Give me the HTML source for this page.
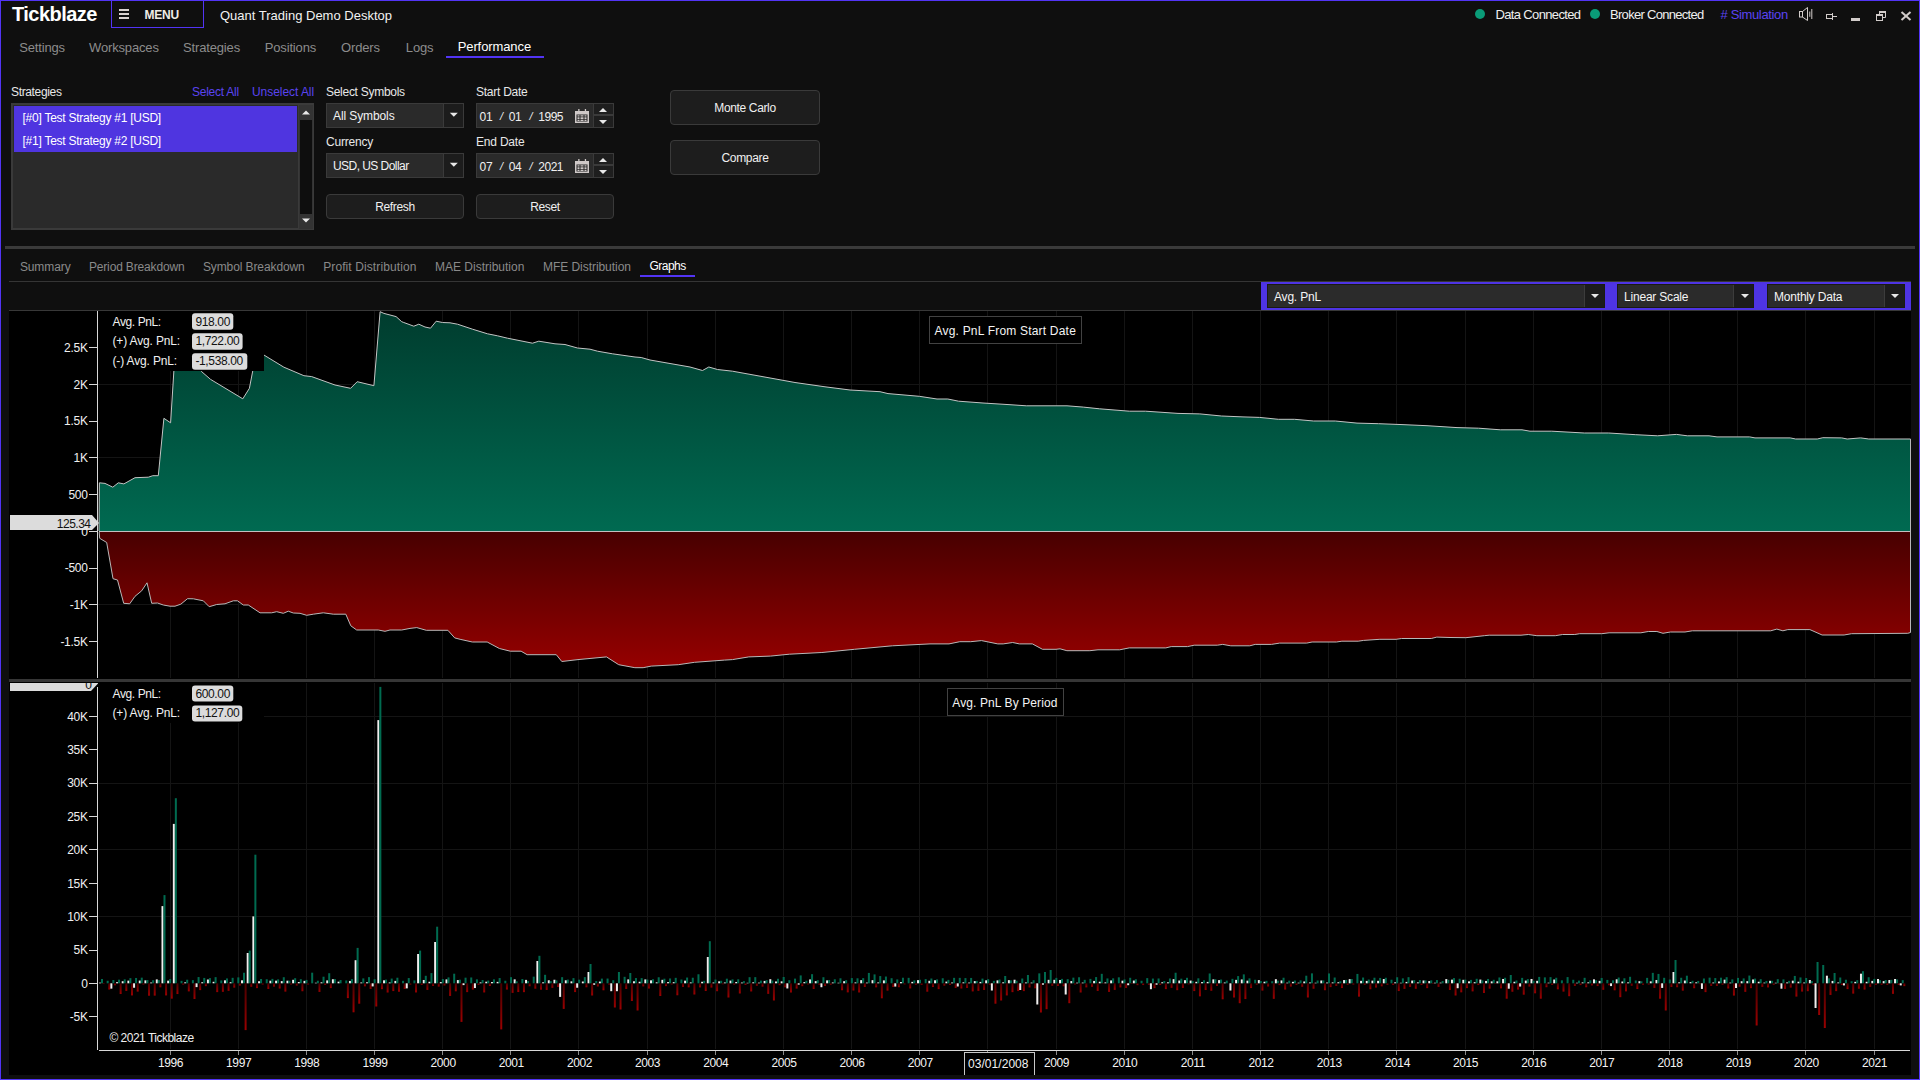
<!DOCTYPE html><html><head><meta charset="utf-8"><style>html,body{margin:0;padding:0;}body{width:1920px;height:1080px;background:#0f0f0f;position:relative;overflow:hidden;font-family:"Liberation Sans",sans-serif;}.t{position:absolute;white-space:pre;line-height:1;}svg{position:absolute;left:0;top:0;}</style></head><body><div class="t" style="top:4.37px;font-size:20px;color:#ffffff;font-weight:bold;letter-spacing:-0.55px;left:12px;">Tickblaze</div><div style="position:absolute;left:111px;top:0px;width:93px;height:28px;box-sizing:border-box;border:1px solid #5234f5;"></div><div style="position:absolute;left:119px;top:9px;width:10px;height:2px;box-sizing:border-box;background:#d8d2d0;"></div><div style="position:absolute;left:119px;top:13px;width:10px;height:2px;box-sizing:border-box;background:#d8d2d0;"></div><div style="position:absolute;left:119px;top:17px;width:10px;height:2px;box-sizing:border-box;background:#d8d2d0;"></div><div class="t" style="top:8.64px;font-size:12px;color:#f0ece6;font-weight:bold;letter-spacing:-0.2px;left:144.5px;">MENU</div><div class="t" style="top:9.00px;font-size:13px;color:#f2f2f2;left:220px;">Quant Trading Demo Desktop</div><div style="position:absolute;left:1475px;top:9px;width:10px;height:10px;border-radius:50%;background:#0a9c78"></div><div class="t" style="top:8.00px;font-size:13px;color:#f0f0f0;letter-spacing:-0.65px;left:1495.5px;">Data Connected</div><div style="position:absolute;left:1590px;top:9px;width:10px;height:10px;border-radius:50%;background:#0a9c78"></div><div class="t" style="top:8.00px;font-size:13px;color:#f0f0f0;letter-spacing:-0.7px;left:1610px;">Broker Connected</div><div class="t" style="top:8.00px;font-size:13px;color:#5b43f2;letter-spacing:-0.35px;left:1720.5px;"># Simulation</div><div class="t" style="top:40.80px;font-size:13px;color:#8c8c8c;letter-spacing:-0.15px;left:19.2px;">Settings</div><div class="t" style="top:40.80px;font-size:13px;color:#8c8c8c;letter-spacing:-0.15px;left:89px;">Workspaces</div><div class="t" style="top:40.80px;font-size:13px;color:#8c8c8c;letter-spacing:-0.15px;left:183px;">Strategies</div><div class="t" style="top:40.80px;font-size:13px;color:#8c8c8c;letter-spacing:-0.15px;left:264.7px;">Positions</div><div class="t" style="top:40.80px;font-size:13px;color:#8c8c8c;letter-spacing:-0.15px;left:341px;">Orders</div><div class="t" style="top:40.80px;font-size:13px;color:#8c8c8c;letter-spacing:-0.15px;left:405.8px;">Logs</div><div class="t" style="top:40.00px;font-size:13px;color:#ffffff;letter-spacing:-0.1px;left:457.7px;">Performance</div><div style="position:absolute;left:446px;top:56px;width:98px;height:2px;box-sizing:border-box;background:#5234f5;"></div><div class="t" style="top:85.64px;font-size:12px;color:#e8e8e8;letter-spacing:-0.35px;left:11px;">Strategies</div><div class="t" style="top:85.84px;font-size:12px;color:#5a44f0;letter-spacing:-0.25px;left:192px;">Select All</div><div class="t" style="top:85.84px;font-size:12px;color:#5a44f0;letter-spacing:-0.05px;left:252px;">Unselect All</div><div style="position:absolute;left:11px;top:103px;width:303px;height:127px;box-sizing:border-box;background:#3a3a3a;"></div><div style="position:absolute;left:13px;top:105px;width:285px;height:123px;box-sizing:border-box;background:#2a2a2a;"></div><div style="position:absolute;left:14px;top:106px;width:283px;height:46px;box-sizing:border-box;background:#4f35e0;"></div><div class="t" style="top:111.54px;font-size:12px;color:#ffffff;letter-spacing:-0.25px;left:22.5px;">[#0] Test Strategy #1 [USD]</div><div class="t" style="top:135.04px;font-size:12px;color:#ffffff;letter-spacing:-0.25px;left:22.5px;">[#1] Test Strategy #2 [USD]</div><div style="position:absolute;left:299px;top:105px;width:14px;height:124px;box-sizing:border-box;background:#333333;"></div><div style="position:absolute;left:300px;top:120px;width:12px;height:94px;box-sizing:border-box;background:#0e0e0e;"></div><div style="position:absolute;left:326px;top:103px;width:138px;height:25px;box-sizing:border-box;background:#2a2a2a;border:1px solid #3a3a3a;"></div><div style="position:absolute;left:443px;top:104px;width:20px;height:23px;box-sizing:border-box;background:#1c1c1c;border-left:1px solid #3a3a3a;"></div><div class="t" style="top:109.84px;font-size:12px;color:#f2f2f2;letter-spacing:-0.1px;left:333px;">All Symbols</div><div class="t" style="top:86.24px;font-size:12px;color:#e8e8e8;letter-spacing:-0.28px;left:326px;">Select Symbols</div><div class="t" style="top:135.84px;font-size:12px;color:#e8e8e8;letter-spacing:-0.2px;left:326px;">Currency</div><div style="position:absolute;left:326px;top:153px;width:138px;height:25px;box-sizing:border-box;background:#2a2a2a;border:1px solid #3a3a3a;"></div><div style="position:absolute;left:443px;top:154px;width:20px;height:23px;box-sizing:border-box;background:#1c1c1c;border-left:1px solid #3a3a3a;"></div><div class="t" style="top:159.84px;font-size:12px;color:#f2f2f2;letter-spacing:-0.55px;left:333px;">USD, US Dollar</div><div style="position:absolute;left:326px;top:194px;width:138px;height:25px;box-sizing:border-box;background:#1d1d1d;border:1px solid #3a3a3a;border-radius:4px;"></div><div class="t" style="top:200.64px;font-size:12px;color:#f0f0f0;letter-spacing:-0.35px;left:326.00px;width:138px;text-align:center;">Refresh</div><div style="position:absolute;left:476px;top:194px;width:138px;height:25px;box-sizing:border-box;background:#1d1d1d;border:1px solid #3a3a3a;border-radius:4px;"></div><div class="t" style="top:200.84px;font-size:12px;color:#f0f0f0;letter-spacing:-0.35px;left:476.00px;width:138px;text-align:center;">Reset</div><div style="position:absolute;left:670px;top:90px;width:150px;height:35px;box-sizing:border-box;background:#1d1d1d;border:1px solid #3a3a3a;border-radius:4px;"></div><div class="t" style="top:102.14px;font-size:12px;color:#f0f0f0;letter-spacing:-0.35px;left:670.00px;width:150px;text-align:center;">Monte Carlo</div><div style="position:absolute;left:670px;top:140px;width:150px;height:35px;box-sizing:border-box;background:#1d1d1d;border:1px solid #3a3a3a;border-radius:4px;"></div><div class="t" style="top:152.14px;font-size:12px;color:#f0f0f0;letter-spacing:-0.35px;left:670.00px;width:150px;text-align:center;">Compare</div><div class="t" style="top:86.34px;font-size:12px;color:#e8e8e8;letter-spacing:-0.25px;left:476px;">Start Date</div><div style="position:absolute;left:476px;top:103px;width:138px;height:25px;box-sizing:border-box;background:#2a2a2a;border:1px solid #3a3a3a;"></div><div style="position:absolute;left:593px;top:103px;width:21px;height:25px;box-sizing:border-box;background:#3a3a3a;"></div><div style="position:absolute;left:594px;top:104px;width:19px;height:10px;box-sizing:border-box;background:#1e1e1e;"></div><div style="position:absolute;left:594px;top:116px;width:19px;height:11px;box-sizing:border-box;background:#1e1e1e;"></div><div class="t" style="top:110.64px;font-size:12px;color:#f0f0f0;letter-spacing:-0.3px;left:479.6px;">01</div><div class="t" style="top:111.49px;font-size:11px;color:#f0f0f0;left:500px;font-style:italic;">/</div><div class="t" style="top:110.64px;font-size:12px;color:#f0f0f0;letter-spacing:-0.3px;left:508.7px;">01</div><div class="t" style="top:111.49px;font-size:11px;color:#f0f0f0;left:529.6px;font-style:italic;">/</div><div class="t" style="top:110.64px;font-size:12px;color:#f0f0f0;letter-spacing:-0.5px;left:538.3px;">1995</div><div class="t" style="top:135.84px;font-size:12px;color:#e8e8e8;letter-spacing:-0.2px;left:476px;">End Date</div><div style="position:absolute;left:476px;top:153px;width:138px;height:25px;box-sizing:border-box;background:#2a2a2a;border:1px solid #3a3a3a;"></div><div style="position:absolute;left:593px;top:153px;width:21px;height:25px;box-sizing:border-box;background:#3a3a3a;"></div><div style="position:absolute;left:594px;top:154px;width:19px;height:10px;box-sizing:border-box;background:#1e1e1e;"></div><div style="position:absolute;left:594px;top:166px;width:19px;height:11px;box-sizing:border-box;background:#1e1e1e;"></div><div class="t" style="top:160.64px;font-size:12px;color:#f0f0f0;letter-spacing:-0.3px;left:479.6px;">07</div><div class="t" style="top:161.49px;font-size:11px;color:#f0f0f0;left:500px;font-style:italic;">/</div><div class="t" style="top:160.64px;font-size:12px;color:#f0f0f0;letter-spacing:-0.3px;left:508.7px;">04</div><div class="t" style="top:161.49px;font-size:11px;color:#f0f0f0;left:529.6px;font-style:italic;">/</div><div class="t" style="top:160.64px;font-size:12px;color:#f0f0f0;letter-spacing:-0.5px;left:538.3px;">2021</div><div style="position:absolute;left:5px;top:246px;width:1910px;height:3px;box-sizing:border-box;background:#3a3a3a;"></div><div class="t" style="top:260.84px;font-size:12px;color:#8a8a8a;letter-spacing:-0.1px;left:19.9px;">Summary</div><div class="t" style="top:260.84px;font-size:12px;color:#8a8a8a;letter-spacing:-0.15px;left:88.9px;">Period Breakdown</div><div class="t" style="top:260.84px;font-size:12px;color:#8a8a8a;letter-spacing:-0.1px;left:202.9px;">Symbol Breakdown</div><div class="t" style="top:260.84px;font-size:12px;color:#8a8a8a;letter-spacing:0.1px;left:323.2px;">Profit Distribution</div><div class="t" style="top:260.84px;font-size:12px;color:#8a8a8a;letter-spacing:0px;left:435px;">MAE Distribution</div><div class="t" style="top:260.84px;font-size:12px;color:#8a8a8a;letter-spacing:-0.05px;left:543px;">MFE Distribution</div><div class="t" style="top:259.84px;font-size:12px;color:#ffffff;letter-spacing:-0.5px;left:649.4px;">Graphs</div><div style="position:absolute;left:640px;top:275px;width:55px;height:2px;box-sizing:border-box;background:#5234f5;"></div><div style="position:absolute;left:9px;top:281px;width:1902px;height:1px;box-sizing:border-box;background:#353535;"></div><div style="position:absolute;left:1261px;top:282px;width:650px;height:28px;box-sizing:border-box;background:#4e34e4;"></div><div style="position:absolute;left:1267px;top:284px;width:338px;height:24px;box-sizing:border-box;background:#2b2b2b;border:1px solid #1a1a14;"></div><div style="position:absolute;left:1584px;top:285px;width:20px;height:22px;box-sizing:border-box;background:#1c1c1c;border-left:1px solid #3c3c3c;"></div><div class="t" style="top:290.84px;font-size:12px;color:#f4f4f4;letter-spacing:-0.2px;left:1274px;">Avg. PnL</div><div style="position:absolute;left:1617px;top:284px;width:137px;height:24px;box-sizing:border-box;background:#2b2b2b;border:1px solid #1a1a14;"></div><div style="position:absolute;left:1733px;top:285px;width:20px;height:22px;box-sizing:border-box;background:#1c1c1c;border-left:1px solid #3c3c3c;"></div><div class="t" style="top:290.84px;font-size:12px;color:#f4f4f4;letter-spacing:-0.2px;left:1624px;">Linear Scale</div><div style="position:absolute;left:1767px;top:284px;width:138px;height:24px;box-sizing:border-box;background:#2b2b2b;border:1px solid #1a1a14;"></div><div style="position:absolute;left:1884px;top:285px;width:20px;height:22px;box-sizing:border-box;background:#1c1c1c;border-left:1px solid #3c3c3c;"></div><div class="t" style="top:290.84px;font-size:12px;color:#f4f4f4;letter-spacing:-0.2px;left:1774px;">Monthly Data</div><svg width="1920" height="1080"><rect x="9" y="310" width="1902" height="1" fill="#383838"/><rect x="9" y="311" width="1902" height="368" fill="#000"/><rect x="9" y="679" width="1902" height="3" fill="#363636"/><rect x="9" y="682" width="1902" height="393" fill="#000"/><line x1="170.5" y1="311" x2="170.5" y2="678" stroke="#141414" stroke-width="1"/><line x1="238.5" y1="311" x2="238.5" y2="678" stroke="#141414" stroke-width="1"/><line x1="306.5" y1="311" x2="306.5" y2="678" stroke="#141414" stroke-width="1"/><line x1="374.5" y1="311" x2="374.5" y2="678" stroke="#141414" stroke-width="1"/><line x1="442.5" y1="311" x2="442.5" y2="678" stroke="#141414" stroke-width="1"/><line x1="510.5" y1="311" x2="510.5" y2="678" stroke="#141414" stroke-width="1"/><line x1="578.5" y1="311" x2="578.5" y2="678" stroke="#141414" stroke-width="1"/><line x1="647.5" y1="311" x2="647.5" y2="678" stroke="#141414" stroke-width="1"/><line x1="715.5" y1="311" x2="715.5" y2="678" stroke="#141414" stroke-width="1"/><line x1="783.5" y1="311" x2="783.5" y2="678" stroke="#141414" stroke-width="1"/><line x1="851.5" y1="311" x2="851.5" y2="678" stroke="#141414" stroke-width="1"/><line x1="919.5" y1="311" x2="919.5" y2="678" stroke="#141414" stroke-width="1"/><line x1="987.5" y1="311" x2="987.5" y2="678" stroke="#141414" stroke-width="1"/><line x1="1056.5" y1="311" x2="1056.5" y2="678" stroke="#141414" stroke-width="1"/><line x1="1124.5" y1="311" x2="1124.5" y2="678" stroke="#141414" stroke-width="1"/><line x1="1192.5" y1="311" x2="1192.5" y2="678" stroke="#141414" stroke-width="1"/><line x1="1260.5" y1="311" x2="1260.5" y2="678" stroke="#141414" stroke-width="1"/><line x1="1328.5" y1="311" x2="1328.5" y2="678" stroke="#141414" stroke-width="1"/><line x1="1396.5" y1="311" x2="1396.5" y2="678" stroke="#141414" stroke-width="1"/><line x1="1465.5" y1="311" x2="1465.5" y2="678" stroke="#141414" stroke-width="1"/><line x1="1533.5" y1="311" x2="1533.5" y2="678" stroke="#141414" stroke-width="1"/><line x1="1601.5" y1="311" x2="1601.5" y2="678" stroke="#141414" stroke-width="1"/><line x1="1669.5" y1="311" x2="1669.5" y2="678" stroke="#141414" stroke-width="1"/><line x1="1737.5" y1="311" x2="1737.5" y2="678" stroke="#141414" stroke-width="1"/><line x1="1805.5" y1="311" x2="1805.5" y2="678" stroke="#141414" stroke-width="1"/><line x1="1874.5" y1="311" x2="1874.5" y2="678" stroke="#141414" stroke-width="1"/><line x1="98" y1="384.5" x2="1911" y2="384.5" stroke="#141414" stroke-width="1"/><line x1="98" y1="457.5" x2="1911" y2="457.5" stroke="#141414" stroke-width="1"/><line x1="98" y1="604.5" x2="1911" y2="604.5" stroke="#141414" stroke-width="1"/><defs><linearGradient id="gg" gradientUnits="userSpaceOnUse" x1="0" y1="311" x2="0" y2="531"><stop offset="0" stop-color="#003c2e"/><stop offset="1" stop-color="#006a51"/></linearGradient><linearGradient id="rg" gradientUnits="userSpaceOnUse" x1="0" y1="531" x2="0" y2="668"><stop offset="0" stop-color="#470000"/><stop offset="1" stop-color="#960000"/></linearGradient><linearGradient id="rb" x1="0" y1="0" x2="0" y2="1"><stop offset="0" stop-color="#4a0000"/><stop offset="1" stop-color="#9a0000"/></linearGradient></defs><polygon points="99.0,531.5 99.4,482.8 105.0,483.4 112.8,487.2 118.3,482.8 123.9,483.9 135.0,477.7 148.3,477.2 152.8,475.7 158.3,475.7 163.9,418.3 170.6,422.8 173.9,370.6 178.0,345.0 201.7,371.7 210.6,379.4 242.8,398.8 249.4,388.3 252.8,370.6 258.0,350.0 263.9,355.0 283.9,367.2 303.9,375.7 311.7,376.6 335.0,385.0 350.6,388.3 357.2,381.7 373.9,385.7 380.1,311.7 383.9,313.4 396.1,316.6 401.7,321.7 403.8,322.5 413.8,326.2 418.8,324.2 425.0,327.0 430.5,328.2 436.2,321.2 442.5,322.5 450.0,322.8 457.5,324.2 472.5,329.2 487.5,333.8 497.5,335.8 507.5,338.2 532.5,343.2 538.8,341.2 555.0,343.8 565.0,344.5 577.5,348.0 590.0,349.2 597.5,351.2 612.5,353.8 635.0,357.0 641.2,357.5 650.0,360.0 690.0,367.0 702.5,370.5 708.8,367.0 717.5,369.5 732.5,371.2 795.0,382.5 825.0,386.8 850.0,390.0 880.0,391.7 888.0,393.6 919.3,396.3 937.0,399.0 947.8,399.0 958.6,401.2 983.0,403.0 1010.0,404.7 1026.3,405.8 1067.0,405.8 1083.3,407.1 1099.5,408.8 1129.3,411.2 1145.6,411.2 1178.0,413.4 1199.8,413.9 1221.5,416.0 1243.0,416.9 1259.4,417.4 1278.4,419.3 1294.6,419.3 1313.6,421.0 1335.3,421.0 1357.0,423.1 1378.6,423.7 1400.0,424.5 1427.0,425.7 1457.0,427.6 1478.6,428.2 1500.3,429.8 1522.0,429.8 1530.0,431.2 1551.8,431.2 1584.3,433.0 1608.7,433.0 1635.8,434.7 1657.5,435.8 1676.4,434.4 1687.3,435.8 1709.0,435.8 1717.0,436.9 1749.6,436.9 1755.0,437.9 1790.2,437.9 1795.7,439.0 1817.3,439.0 1822.8,437.7 1841.7,437.9 1847.2,439.0 1860.7,437.9 1868.8,439.0 1910.5,439.0 1910.5,531.5" fill="url(#gg)"/><polygon points="99.0,531.5 99.2,532.0 99.7,538.3 106.7,542.5 113.0,578.7 117.5,580.0 123.7,603.3 129.7,603.8 135.0,596.3 141.7,590.8 147.0,582.8 151.7,603.3 157.5,603.0 163.3,605.0 170.0,606.2 175.0,606.2 180.8,604.2 187.5,598.7 193.3,598.8 203.3,600.8 209.2,606.7 216.7,604.5 225.0,603.8 233.3,600.8 237.5,600.8 243.3,605.0 248.3,605.0 260.0,612.8 271.7,612.8 276.7,611.7 283.3,613.3 288.3,611.2 293.3,613.0 300.0,613.3 306.7,615.3 313.3,614.2 323.3,612.8 333.3,614.2 345.8,614.2 350.8,625.8 356.7,630.0 378.3,630.0 385.0,631.3 390.0,630.0 401.7,630.0 410.0,628.4 416.8,627.6 426.3,630.3 447.9,630.3 454.7,637.9 460.1,639.3 472.3,642.0 487.2,642.0 499.4,648.5 510.3,651.2 521.1,651.2 527.1,654.7 556.3,654.7 561.8,661.5 578.0,659.6 606.5,656.9 618.7,664.7 634.9,667.7 643.1,667.7 651.2,666.1 678.3,664.7 694.6,662.3 724.4,660.1 732.5,659.6 748.8,656.9 770.4,656.1 789.4,654.2 821.9,652.5 854.4,649.3 892.4,645.8 930.0,643.9 949.0,643.9 959.8,641.7 970.7,641.7 981.5,640.6 997.8,643.9 1003.2,643.9 1012.7,642.5 1019.4,643.9 1032.4,643.9 1042.5,649.3 1056.0,649.3 1060.0,648.8 1066.9,650.7 1089.9,650.7 1098.0,649.8 1119.7,649.8 1129.2,647.9 1165.8,647.9 1171.2,646.6 1187.5,646.6 1194.2,645.2 1217.3,645.2 1222.7,644.4 1230.8,645.8 1249.8,645.8 1255.2,644.4 1271.5,644.4 1279.6,643.1 1306.7,643.1 1312.1,642.0 1336.5,642.0 1341.9,641.2 1358.2,641.2 1363.6,640.4 1379.9,639.3 1396.1,639.3 1401.5,638.5 1431.3,638.5 1436.8,637.1 1450.0,637.5 1465.9,637.7 1484.3,635.7 1489.2,635.2 1521.0,635.2 1528.3,634.5 1536.9,635.7 1555.3,635.7 1562.6,634.5 1574.8,634.5 1579.7,633.7 1601.8,633.7 1609.1,632.8 1640.9,632.8 1648.3,631.5 1656.9,631.5 1663.0,633.3 1670.3,632.0 1685.0,632.0 1692.3,630.8 1770.7,630.8 1776.8,629.1 1782.9,630.8 1787.8,629.6 1809.9,629.6 1822.1,635.0 1844.1,635.0 1851.5,633.7 1907.8,633.3 1910.5,632.5 1910.5,531.5" fill="url(#rg)"/><polyline points="99.0,531.0 99.4,482.8 105.0,483.4 112.8,487.2 118.3,482.8 123.9,483.9 135.0,477.7 148.3,477.2 152.8,475.7 158.3,475.7 163.9,418.3 170.6,422.8 173.9,370.6 178.0,345.0 201.7,371.7 210.6,379.4 242.8,398.8 249.4,388.3 252.8,370.6 258.0,350.0 263.9,355.0 283.9,367.2 303.9,375.7 311.7,376.6 335.0,385.0 350.6,388.3 357.2,381.7 373.9,385.7 380.1,311.7 383.9,313.4 396.1,316.6 401.7,321.7 403.8,322.5 413.8,326.2 418.8,324.2 425.0,327.0 430.5,328.2 436.2,321.2 442.5,322.5 450.0,322.8 457.5,324.2 472.5,329.2 487.5,333.8 497.5,335.8 507.5,338.2 532.5,343.2 538.8,341.2 555.0,343.8 565.0,344.5 577.5,348.0 590.0,349.2 597.5,351.2 612.5,353.8 635.0,357.0 641.2,357.5 650.0,360.0 690.0,367.0 702.5,370.5 708.8,367.0 717.5,369.5 732.5,371.2 795.0,382.5 825.0,386.8 850.0,390.0 880.0,391.7 888.0,393.6 919.3,396.3 937.0,399.0 947.8,399.0 958.6,401.2 983.0,403.0 1010.0,404.7 1026.3,405.8 1067.0,405.8 1083.3,407.1 1099.5,408.8 1129.3,411.2 1145.6,411.2 1178.0,413.4 1199.8,413.9 1221.5,416.0 1243.0,416.9 1259.4,417.4 1278.4,419.3 1294.6,419.3 1313.6,421.0 1335.3,421.0 1357.0,423.1 1378.6,423.7 1400.0,424.5 1427.0,425.7 1457.0,427.6 1478.6,428.2 1500.3,429.8 1522.0,429.8 1530.0,431.2 1551.8,431.2 1584.3,433.0 1608.7,433.0 1635.8,434.7 1657.5,435.8 1676.4,434.4 1687.3,435.8 1709.0,435.8 1717.0,436.9 1749.6,436.9 1755.0,437.9 1790.2,437.9 1795.7,439.0 1817.3,439.0 1822.8,437.7 1841.7,437.9 1847.2,439.0 1860.7,437.9 1868.8,439.0 1910.5,439.0 1910.5,531.5" fill="none" stroke="#c4c4c4" stroke-width="1"/><polyline points="99.2,532.0 99.7,538.3 106.7,542.5 113.0,578.7 117.5,580.0 123.7,603.3 129.7,603.8 135.0,596.3 141.7,590.8 147.0,582.8 151.7,603.3 157.5,603.0 163.3,605.0 170.0,606.2 175.0,606.2 180.8,604.2 187.5,598.7 193.3,598.8 203.3,600.8 209.2,606.7 216.7,604.5 225.0,603.8 233.3,600.8 237.5,600.8 243.3,605.0 248.3,605.0 260.0,612.8 271.7,612.8 276.7,611.7 283.3,613.3 288.3,611.2 293.3,613.0 300.0,613.3 306.7,615.3 313.3,614.2 323.3,612.8 333.3,614.2 345.8,614.2 350.8,625.8 356.7,630.0 378.3,630.0 385.0,631.3 390.0,630.0 401.7,630.0 410.0,628.4 416.8,627.6 426.3,630.3 447.9,630.3 454.7,637.9 460.1,639.3 472.3,642.0 487.2,642.0 499.4,648.5 510.3,651.2 521.1,651.2 527.1,654.7 556.3,654.7 561.8,661.5 578.0,659.6 606.5,656.9 618.7,664.7 634.9,667.7 643.1,667.7 651.2,666.1 678.3,664.7 694.6,662.3 724.4,660.1 732.5,659.6 748.8,656.9 770.4,656.1 789.4,654.2 821.9,652.5 854.4,649.3 892.4,645.8 930.0,643.9 949.0,643.9 959.8,641.7 970.7,641.7 981.5,640.6 997.8,643.9 1003.2,643.9 1012.7,642.5 1019.4,643.9 1032.4,643.9 1042.5,649.3 1056.0,649.3 1060.0,648.8 1066.9,650.7 1089.9,650.7 1098.0,649.8 1119.7,649.8 1129.2,647.9 1165.8,647.9 1171.2,646.6 1187.5,646.6 1194.2,645.2 1217.3,645.2 1222.7,644.4 1230.8,645.8 1249.8,645.8 1255.2,644.4 1271.5,644.4 1279.6,643.1 1306.7,643.1 1312.1,642.0 1336.5,642.0 1341.9,641.2 1358.2,641.2 1363.6,640.4 1379.9,639.3 1396.1,639.3 1401.5,638.5 1431.3,638.5 1436.8,637.1 1450.0,637.5 1465.9,637.7 1484.3,635.7 1489.2,635.2 1521.0,635.2 1528.3,634.5 1536.9,635.7 1555.3,635.7 1562.6,634.5 1574.8,634.5 1579.7,633.7 1601.8,633.7 1609.1,632.8 1640.9,632.8 1648.3,631.5 1656.9,631.5 1663.0,633.3 1670.3,632.0 1685.0,632.0 1692.3,630.8 1770.7,630.8 1776.8,629.1 1782.9,630.8 1787.8,629.6 1809.9,629.6 1822.1,635.0 1844.1,635.0 1851.5,633.7 1907.8,633.3 1910.5,632.5" fill="none" stroke="#b8b8b8" stroke-width="1"/><line x1="99" y1="531.5" x2="1911" y2="531.5" stroke="#c4c0c0" stroke-width="1"/><line x1="1910.5" y1="439" x2="1910.5" y2="632.5" stroke="#b8b8b8" stroke-width="1"/><line x1="97.5" y1="311" x2="97.5" y2="678" stroke="#d8d8d8" stroke-width="1"/><line x1="89" y1="347.5" x2="97" y2="347.5" stroke="#d8d8d8" stroke-width="1"/><line x1="89" y1="384.5" x2="97" y2="384.5" stroke="#d8d8d8" stroke-width="1"/><line x1="89" y1="421.5" x2="97" y2="421.5" stroke="#d8d8d8" stroke-width="1"/><line x1="89" y1="457.5" x2="97" y2="457.5" stroke="#d8d8d8" stroke-width="1"/><line x1="89" y1="494.5" x2="97" y2="494.5" stroke="#d8d8d8" stroke-width="1"/><line x1="89" y1="531.5" x2="97" y2="531.5" stroke="#d8d8d8" stroke-width="1"/><line x1="89" y1="568.5" x2="97" y2="568.5" stroke="#d8d8d8" stroke-width="1"/><line x1="89" y1="604.5" x2="97" y2="604.5" stroke="#d8d8d8" stroke-width="1"/><line x1="89" y1="641.5" x2="97" y2="641.5" stroke="#d8d8d8" stroke-width="1"/><rect x="98" y="311" width="166" height="60" fill="#000"/><rect x="192" y="313.2" width="41.3" height="16.5" rx="3" fill="#dcdcdc"/><rect x="192" y="333.3" width="50.6" height="16.5" rx="3" fill="#dcdcdc"/><rect x="192" y="353.3" width="55.3" height="16.5" rx="3" fill="#dcdcdc"/><rect x="929.5" y="316.5" width="152" height="27" fill="#000" stroke="#424242" stroke-width="1"/><polygon points="10,515 92,515 99,523 92,530 10,530" fill="#dcdcdc"/><line x1="170.5" y1="683" x2="170.5" y2="1049" stroke="#141414" stroke-width="1"/><line x1="238.5" y1="683" x2="238.5" y2="1049" stroke="#141414" stroke-width="1"/><line x1="306.5" y1="683" x2="306.5" y2="1049" stroke="#141414" stroke-width="1"/><line x1="374.5" y1="683" x2="374.5" y2="1049" stroke="#141414" stroke-width="1"/><line x1="442.5" y1="683" x2="442.5" y2="1049" stroke="#141414" stroke-width="1"/><line x1="510.5" y1="683" x2="510.5" y2="1049" stroke="#141414" stroke-width="1"/><line x1="578.5" y1="683" x2="578.5" y2="1049" stroke="#141414" stroke-width="1"/><line x1="647.5" y1="683" x2="647.5" y2="1049" stroke="#141414" stroke-width="1"/><line x1="715.5" y1="683" x2="715.5" y2="1049" stroke="#141414" stroke-width="1"/><line x1="783.5" y1="683" x2="783.5" y2="1049" stroke="#141414" stroke-width="1"/><line x1="851.5" y1="683" x2="851.5" y2="1049" stroke="#141414" stroke-width="1"/><line x1="919.5" y1="683" x2="919.5" y2="1049" stroke="#141414" stroke-width="1"/><line x1="987.5" y1="683" x2="987.5" y2="1049" stroke="#141414" stroke-width="1"/><line x1="1056.5" y1="683" x2="1056.5" y2="1049" stroke="#141414" stroke-width="1"/><line x1="1124.5" y1="683" x2="1124.5" y2="1049" stroke="#141414" stroke-width="1"/><line x1="1192.5" y1="683" x2="1192.5" y2="1049" stroke="#141414" stroke-width="1"/><line x1="1260.5" y1="683" x2="1260.5" y2="1049" stroke="#141414" stroke-width="1"/><line x1="1328.5" y1="683" x2="1328.5" y2="1049" stroke="#141414" stroke-width="1"/><line x1="1396.5" y1="683" x2="1396.5" y2="1049" stroke="#141414" stroke-width="1"/><line x1="1465.5" y1="683" x2="1465.5" y2="1049" stroke="#141414" stroke-width="1"/><line x1="1533.5" y1="683" x2="1533.5" y2="1049" stroke="#141414" stroke-width="1"/><line x1="1601.5" y1="683" x2="1601.5" y2="1049" stroke="#141414" stroke-width="1"/><line x1="1669.5" y1="683" x2="1669.5" y2="1049" stroke="#141414" stroke-width="1"/><line x1="1737.5" y1="683" x2="1737.5" y2="1049" stroke="#141414" stroke-width="1"/><line x1="1805.5" y1="683" x2="1805.5" y2="1049" stroke="#141414" stroke-width="1"/><line x1="1874.5" y1="683" x2="1874.5" y2="1049" stroke="#141414" stroke-width="1"/><line x1="98" y1="716.5" x2="1911" y2="716.5" stroke="#141414" stroke-width="1"/><line x1="98" y1="783.5" x2="1911" y2="783.5" stroke="#141414" stroke-width="1"/><line x1="98" y1="849.5" x2="1911" y2="849.5" stroke="#141414" stroke-width="1"/><line x1="98" y1="916.5" x2="1911" y2="916.5" stroke="#141414" stroke-width="1"/><rect x="99.00" y="982.65" width="2" height="0.65" fill="#f0eeee"/><rect x="101.00" y="978.98" width="2" height="4.32" fill="#006b50"/><rect x="102.60" y="983.3" width="2" height="0.72" fill="url(#rb)"/><rect x="106.68" y="980.76" width="2" height="2.54" fill="#006b50"/><rect x="108.28" y="983.3" width="2" height="6.23" fill="url(#rb)"/><rect x="110.36" y="983.30" width="2" height="5.34" fill="#f0eeee"/><rect x="112.36" y="980.04" width="2" height="3.26" fill="#006b50"/><rect x="113.96" y="983.3" width="2" height="1.98" fill="url(#rb)"/><rect x="116.04" y="982.19" width="2" height="1.11" fill="#f0eeee"/><rect x="118.04" y="979.68" width="2" height="3.62" fill="#006b50"/><rect x="119.64" y="983.3" width="2" height="10.71" fill="url(#rb)"/><rect x="121.72" y="981.22" width="2" height="2.08" fill="#f0eeee"/><rect x="123.72" y="979.33" width="2" height="3.97" fill="#006b50"/><rect x="125.32" y="983.3" width="2" height="7.62" fill="url(#rb)"/><rect x="127.40" y="980.64" width="2" height="2.66" fill="#f0eeee"/><rect x="129.40" y="978.14" width="2" height="5.16" fill="#006b50"/><rect x="131.00" y="983.3" width="2" height="12.13" fill="url(#rb)"/><rect x="133.08" y="983.30" width="2" height="4.45" fill="#f0eeee"/><rect x="135.08" y="977.98" width="2" height="5.32" fill="#006b50"/><rect x="136.68" y="983.3" width="2" height="8.30" fill="url(#rb)"/><rect x="138.76" y="980.56" width="2" height="2.74" fill="#f0eeee"/><rect x="140.76" y="977.66" width="2" height="5.64" fill="#006b50"/><rect x="142.36" y="983.3" width="2" height="1.17" fill="url(#rb)"/><rect x="144.44" y="980.35" width="2" height="2.95" fill="#f0eeee"/><rect x="146.44" y="980.07" width="2" height="3.23" fill="#006b50"/><rect x="148.04" y="983.3" width="2" height="12.42" fill="url(#rb)"/><rect x="150.13" y="982.53" width="2" height="0.77" fill="#f0eeee"/><rect x="152.13" y="980.23" width="2" height="3.07" fill="#006b50"/><rect x="153.73" y="983.3" width="2" height="12.33" fill="url(#rb)"/><rect x="155.81" y="979.42" width="2" height="3.88" fill="#f0eeee"/><rect x="157.81" y="980.09" width="2" height="3.21" fill="#006b50"/><rect x="159.41" y="983.3" width="2" height="3.99" fill="url(#rb)"/><rect x="161.49" y="906.10" width="2" height="77.20" fill="#f0eeee"/><rect x="163.49" y="895.10" width="2" height="88.20" fill="#006b50"/><rect x="165.09" y="983.3" width="2" height="12.13" fill="url(#rb)"/><rect x="167.17" y="980.67" width="2" height="2.63" fill="#f0eeee"/><rect x="169.17" y="979.06" width="2" height="4.24" fill="#006b50"/><rect x="170.77" y="983.3" width="2" height="15.34" fill="url(#rb)"/><rect x="172.85" y="823.90" width="2" height="159.40" fill="#f0eeee"/><rect x="174.85" y="798.20" width="2" height="185.10" fill="#006b50"/><rect x="176.45" y="983.3" width="2" height="10.73" fill="url(#rb)"/><rect x="180.53" y="980.86" width="2" height="2.44" fill="#006b50"/><rect x="182.13" y="983.3" width="2" height="1.21" fill="url(#rb)"/><rect x="184.21" y="982.32" width="2" height="0.98" fill="#f0eeee"/><rect x="186.21" y="979.72" width="2" height="3.58" fill="#006b50"/><rect x="187.81" y="983.3" width="2" height="8.08" fill="url(#rb)"/><rect x="191.89" y="980.15" width="2" height="3.15" fill="#006b50"/><rect x="193.49" y="983.3" width="2" height="15.68" fill="url(#rb)"/><rect x="195.57" y="983.30" width="2" height="3.80" fill="#f0eeee"/><rect x="197.57" y="977.06" width="2" height="6.24" fill="#006b50"/><rect x="199.17" y="983.3" width="2" height="6.81" fill="url(#rb)"/><rect x="201.25" y="982.24" width="2" height="1.06" fill="#f0eeee"/><rect x="203.25" y="977.92" width="2" height="5.38" fill="#006b50"/><rect x="204.85" y="983.3" width="2" height="2.86" fill="url(#rb)"/><rect x="206.93" y="979.54" width="2" height="3.76" fill="#f0eeee"/><rect x="208.93" y="978.09" width="2" height="5.21" fill="#006b50"/><rect x="212.61" y="981.80" width="2" height="1.50" fill="#f0eeee"/><rect x="214.61" y="977.15" width="2" height="6.15" fill="#006b50"/><rect x="216.21" y="983.3" width="2" height="8.81" fill="url(#rb)"/><rect x="220.29" y="980.41" width="2" height="2.89" fill="#006b50"/><rect x="221.89" y="983.3" width="2" height="8.51" fill="url(#rb)"/><rect x="223.97" y="980.33" width="2" height="2.97" fill="#f0eeee"/><rect x="225.97" y="978.44" width="2" height="4.86" fill="#006b50"/><rect x="227.57" y="983.3" width="2" height="7.52" fill="url(#rb)"/><rect x="229.65" y="982.20" width="2" height="1.10" fill="#f0eeee"/><rect x="231.65" y="977.83" width="2" height="5.47" fill="#006b50"/><rect x="233.25" y="983.3" width="2" height="4.30" fill="url(#rb)"/><rect x="237.33" y="977.38" width="2" height="5.92" fill="#006b50"/><rect x="238.93" y="983.3" width="2" height="2.22" fill="url(#rb)"/><rect x="241.01" y="980.31" width="2" height="2.99" fill="#f0eeee"/><rect x="243.01" y="972.75" width="2" height="10.55" fill="#006b50"/><rect x="244.61" y="983.3" width="2" height="46.80" fill="url(#rb)"/><rect x="246.70" y="953.00" width="2" height="30.30" fill="#f0eeee"/><rect x="248.70" y="950.60" width="2" height="32.70" fill="#006b50"/><rect x="250.30" y="983.3" width="2" height="3.44" fill="url(#rb)"/><rect x="252.38" y="916.40" width="2" height="66.90" fill="#f0eeee"/><rect x="254.38" y="854.70" width="2" height="128.60" fill="#006b50"/><rect x="255.98" y="983.3" width="2" height="4.82" fill="url(#rb)"/><rect x="258.06" y="981.24" width="2" height="2.06" fill="#f0eeee"/><rect x="260.06" y="978.99" width="2" height="4.31" fill="#006b50"/><rect x="261.66" y="983.3" width="2" height="1.16" fill="url(#rb)"/><rect x="265.74" y="979.25" width="2" height="4.05" fill="#006b50"/><rect x="267.34" y="983.3" width="2" height="5.64" fill="url(#rb)"/><rect x="269.42" y="980.71" width="2" height="2.59" fill="#f0eeee"/><rect x="271.42" y="978.87" width="2" height="4.43" fill="#006b50"/><rect x="273.02" y="983.3" width="2" height="3.31" fill="url(#rb)"/><rect x="275.10" y="980.69" width="2" height="2.61" fill="#f0eeee"/><rect x="277.10" y="979.38" width="2" height="3.92" fill="#006b50"/><rect x="278.70" y="983.3" width="2" height="5.22" fill="url(#rb)"/><rect x="280.78" y="981.12" width="2" height="2.18" fill="#f0eeee"/><rect x="282.78" y="977.22" width="2" height="6.08" fill="#006b50"/><rect x="284.38" y="983.3" width="2" height="8.31" fill="url(#rb)"/><rect x="286.46" y="980.70" width="2" height="2.60" fill="#f0eeee"/><rect x="288.46" y="980.70" width="2" height="2.60" fill="#006b50"/><rect x="290.06" y="983.3" width="2" height="1.12" fill="url(#rb)"/><rect x="292.14" y="979.81" width="2" height="3.49" fill="#f0eeee"/><rect x="294.14" y="978.19" width="2" height="5.11" fill="#006b50"/><rect x="295.74" y="983.3" width="2" height="2.19" fill="url(#rb)"/><rect x="297.82" y="982.04" width="2" height="1.26" fill="#f0eeee"/><rect x="299.82" y="979.19" width="2" height="4.11" fill="#006b50"/><rect x="301.42" y="983.3" width="2" height="7.94" fill="url(#rb)"/><rect x="303.50" y="980.87" width="2" height="2.43" fill="#f0eeee"/><rect x="305.50" y="979.92" width="2" height="3.38" fill="#006b50"/><rect x="307.10" y="983.3" width="2" height="1.16" fill="url(#rb)"/><rect x="311.18" y="972.69" width="2" height="10.61" fill="#006b50"/><rect x="314.86" y="982.74" width="2" height="0.56" fill="#f0eeee"/><rect x="316.86" y="980.74" width="2" height="2.56" fill="#006b50"/><rect x="318.46" y="983.3" width="2" height="8.60" fill="url(#rb)"/><rect x="320.54" y="982.31" width="2" height="0.99" fill="#f0eeee"/><rect x="322.54" y="976.71" width="2" height="6.59" fill="#006b50"/><rect x="324.14" y="983.3" width="2" height="1.56" fill="url(#rb)"/><rect x="326.22" y="980.40" width="2" height="2.90" fill="#f0eeee"/><rect x="328.22" y="973.22" width="2" height="10.08" fill="#006b50"/><rect x="329.82" y="983.3" width="2" height="4.78" fill="url(#rb)"/><rect x="331.90" y="979.25" width="2" height="4.05" fill="#f0eeee"/><rect x="333.90" y="979.01" width="2" height="4.29" fill="#006b50"/><rect x="337.58" y="981.67" width="2" height="1.63" fill="#f0eeee"/><rect x="339.58" y="980.04" width="2" height="3.26" fill="#006b50"/><rect x="345.27" y="980.48" width="2" height="2.82" fill="#006b50"/><rect x="346.87" y="983.3" width="2" height="14.80" fill="url(#rb)"/><rect x="348.95" y="980.95" width="2" height="2.35" fill="#f0eeee"/><rect x="350.95" y="979.10" width="2" height="4.20" fill="#006b50"/><rect x="352.55" y="983.3" width="2" height="29.00" fill="url(#rb)"/><rect x="354.63" y="960.20" width="2" height="23.10" fill="#f0eeee"/><rect x="356.63" y="947.90" width="2" height="35.40" fill="#006b50"/><rect x="358.23" y="983.3" width="2" height="20.40" fill="url(#rb)"/><rect x="360.31" y="982.46" width="2" height="0.84" fill="#f0eeee"/><rect x="362.31" y="978.39" width="2" height="4.91" fill="#006b50"/><rect x="363.91" y="983.3" width="2" height="3.02" fill="url(#rb)"/><rect x="365.99" y="982.28" width="2" height="1.02" fill="#f0eeee"/><rect x="367.99" y="977.13" width="2" height="6.17" fill="#006b50"/><rect x="369.59" y="983.3" width="2" height="5.56" fill="url(#rb)"/><rect x="371.67" y="983.30" width="2" height="3.12" fill="#f0eeee"/><rect x="373.67" y="979.24" width="2" height="4.06" fill="#006b50"/><rect x="375.27" y="983.3" width="2" height="23.20" fill="url(#rb)"/><rect x="377.35" y="720.10" width="2" height="263.20" fill="#f0eeee"/><rect x="379.35" y="686.90" width="2" height="296.40" fill="#006b50"/><rect x="380.95" y="983.3" width="2" height="5.88" fill="url(#rb)"/><rect x="383.03" y="980.31" width="2" height="2.99" fill="#f0eeee"/><rect x="385.03" y="979.61" width="2" height="3.69" fill="#006b50"/><rect x="386.63" y="983.3" width="2" height="9.21" fill="url(#rb)"/><rect x="388.71" y="982.46" width="2" height="0.84" fill="#f0eeee"/><rect x="390.71" y="978.58" width="2" height="4.72" fill="#006b50"/><rect x="392.31" y="983.3" width="2" height="7.77" fill="url(#rb)"/><rect x="394.39" y="980.91" width="2" height="2.39" fill="#f0eeee"/><rect x="396.39" y="977.72" width="2" height="5.58" fill="#006b50"/><rect x="397.99" y="983.3" width="2" height="8.44" fill="url(#rb)"/><rect x="402.07" y="980.84" width="2" height="2.46" fill="#006b50"/><rect x="403.67" y="983.3" width="2" height="5.66" fill="url(#rb)"/><rect x="405.75" y="983.30" width="2" height="5.06" fill="#f0eeee"/><rect x="407.75" y="978.05" width="2" height="5.25" fill="#006b50"/><rect x="409.35" y="983.3" width="2" height="1.23" fill="url(#rb)"/><rect x="413.43" y="980.41" width="2" height="2.89" fill="#006b50"/><rect x="415.03" y="983.3" width="2" height="9.14" fill="url(#rb)"/><rect x="417.11" y="954.00" width="2" height="29.30" fill="#f0eeee"/><rect x="419.11" y="950.60" width="2" height="32.70" fill="#006b50"/><rect x="420.71" y="983.3" width="2" height="1.65" fill="url(#rb)"/><rect x="422.79" y="979.98" width="2" height="3.32" fill="#f0eeee"/><rect x="424.79" y="975.80" width="2" height="7.50" fill="#006b50"/><rect x="426.39" y="983.3" width="2" height="6.60" fill="url(#rb)"/><rect x="428.47" y="981.76" width="2" height="1.54" fill="#f0eeee"/><rect x="430.47" y="973.09" width="2" height="10.21" fill="#006b50"/><rect x="432.07" y="983.3" width="2" height="2.66" fill="url(#rb)"/><rect x="434.15" y="942.00" width="2" height="41.30" fill="#f0eeee"/><rect x="436.15" y="926.70" width="2" height="56.60" fill="#006b50"/><rect x="437.75" y="983.3" width="2" height="3.24" fill="url(#rb)"/><rect x="439.84" y="982.07" width="2" height="1.23" fill="#f0eeee"/><rect x="441.84" y="979.03" width="2" height="4.27" fill="#006b50"/><rect x="443.44" y="983.3" width="2" height="2.11" fill="url(#rb)"/><rect x="445.52" y="979.41" width="2" height="3.89" fill="#f0eeee"/><rect x="447.52" y="977.41" width="2" height="5.89" fill="#006b50"/><rect x="449.12" y="983.3" width="2" height="12.62" fill="url(#rb)"/><rect x="453.20" y="973.71" width="2" height="9.59" fill="#006b50"/><rect x="454.80" y="983.3" width="2" height="8.00" fill="url(#rb)"/><rect x="456.88" y="980.09" width="2" height="3.21" fill="#f0eeee"/><rect x="458.88" y="979.69" width="2" height="3.61" fill="#006b50"/><rect x="460.48" y="983.3" width="2" height="38.60" fill="url(#rb)"/><rect x="462.56" y="983.30" width="2" height="1.81" fill="#f0eeee"/><rect x="464.56" y="977.68" width="2" height="5.62" fill="#006b50"/><rect x="466.16" y="983.3" width="2" height="8.80" fill="url(#rb)"/><rect x="470.24" y="977.47" width="2" height="5.83" fill="#006b50"/><rect x="471.84" y="983.3" width="2" height="6.26" fill="url(#rb)"/><rect x="473.92" y="983.30" width="2" height="4.75" fill="#f0eeee"/><rect x="475.92" y="979.34" width="2" height="3.96" fill="#006b50"/><rect x="477.52" y="983.3" width="2" height="1.55" fill="url(#rb)"/><rect x="479.60" y="982.40" width="2" height="0.90" fill="#f0eeee"/><rect x="481.60" y="980.01" width="2" height="3.29" fill="#006b50"/><rect x="483.20" y="983.3" width="2" height="9.14" fill="url(#rb)"/><rect x="485.28" y="981.72" width="2" height="1.58" fill="#f0eeee"/><rect x="487.28" y="980.57" width="2" height="2.73" fill="#006b50"/><rect x="488.88" y="983.3" width="2" height="2.73" fill="url(#rb)"/><rect x="490.96" y="982.03" width="2" height="1.27" fill="#f0eeee"/><rect x="492.96" y="979.35" width="2" height="3.95" fill="#006b50"/><rect x="496.64" y="981.88" width="2" height="1.42" fill="#f0eeee"/><rect x="498.64" y="978.05" width="2" height="5.25" fill="#006b50"/><rect x="500.24" y="983.3" width="2" height="46.10" fill="url(#rb)"/><rect x="504.32" y="980.75" width="2" height="2.55" fill="#006b50"/><rect x="505.92" y="983.3" width="2" height="6.25" fill="url(#rb)"/><rect x="510.00" y="977.16" width="2" height="6.14" fill="#006b50"/><rect x="511.60" y="983.3" width="2" height="9.55" fill="url(#rb)"/><rect x="513.68" y="979.37" width="2" height="3.93" fill="#f0eeee"/><rect x="515.68" y="981.30" width="2" height="2.00" fill="#006b50"/><rect x="517.28" y="983.3" width="2" height="8.73" fill="url(#rb)"/><rect x="521.36" y="979.03" width="2" height="4.27" fill="#006b50"/><rect x="522.96" y="983.3" width="2" height="8.85" fill="url(#rb)"/><rect x="525.04" y="979.89" width="2" height="3.41" fill="#f0eeee"/><rect x="527.04" y="981.13" width="2" height="2.17" fill="#006b50"/><rect x="528.64" y="983.3" width="2" height="2.94" fill="url(#rb)"/><rect x="532.72" y="976.66" width="2" height="6.64" fill="#006b50"/><rect x="534.32" y="983.3" width="2" height="5.37" fill="url(#rb)"/><rect x="536.40" y="961.00" width="2" height="22.30" fill="#f0eeee"/><rect x="538.40" y="955.80" width="2" height="27.50" fill="#006b50"/><rect x="540.00" y="983.3" width="2" height="6.37" fill="url(#rb)"/><rect x="542.09" y="982.34" width="2" height="0.96" fill="#f0eeee"/><rect x="544.09" y="974.80" width="2" height="8.50" fill="#006b50"/><rect x="545.69" y="983.3" width="2" height="6.62" fill="url(#rb)"/><rect x="547.77" y="980.27" width="2" height="3.03" fill="#f0eeee"/><rect x="549.77" y="981.15" width="2" height="2.15" fill="#006b50"/><rect x="551.37" y="983.3" width="2" height="4.51" fill="url(#rb)"/><rect x="553.45" y="979.76" width="2" height="3.54" fill="#f0eeee"/><rect x="555.45" y="980.41" width="2" height="2.89" fill="#006b50"/><rect x="557.05" y="983.3" width="2" height="3.60" fill="url(#rb)"/><rect x="559.13" y="983.30" width="2" height="13.60" fill="#f0eeee"/><rect x="561.13" y="977.17" width="2" height="6.13" fill="#006b50"/><rect x="562.73" y="983.3" width="2" height="25.60" fill="url(#rb)"/><rect x="564.81" y="980.28" width="2" height="3.02" fill="#f0eeee"/><rect x="566.81" y="979.59" width="2" height="3.71" fill="#006b50"/><rect x="570.49" y="981.35" width="2" height="1.95" fill="#f0eeee"/><rect x="572.49" y="978.12" width="2" height="5.18" fill="#006b50"/><rect x="574.09" y="983.3" width="2" height="8.77" fill="url(#rb)"/><rect x="576.17" y="983.30" width="2" height="4.44" fill="#f0eeee"/><rect x="578.17" y="979.66" width="2" height="3.64" fill="#006b50"/><rect x="581.85" y="981.52" width="2" height="1.78" fill="#f0eeee"/><rect x="583.85" y="977.12" width="2" height="6.18" fill="#006b50"/><rect x="585.45" y="983.3" width="2" height="3.97" fill="url(#rb)"/><rect x="587.53" y="972.00" width="2" height="11.30" fill="#f0eeee"/><rect x="589.53" y="964.00" width="2" height="19.30" fill="#006b50"/><rect x="591.13" y="983.3" width="2" height="12.20" fill="url(#rb)"/><rect x="593.21" y="983.30" width="2" height="1.50" fill="#f0eeee"/><rect x="595.21" y="981.03" width="2" height="2.27" fill="#006b50"/><rect x="596.81" y="983.3" width="2" height="3.14" fill="url(#rb)"/><rect x="598.89" y="981.57" width="2" height="1.73" fill="#f0eeee"/><rect x="600.89" y="978.62" width="2" height="4.68" fill="#006b50"/><rect x="602.49" y="983.3" width="2" height="6.98" fill="url(#rb)"/><rect x="606.57" y="978.55" width="2" height="4.75" fill="#006b50"/><rect x="608.17" y="983.3" width="2" height="1.20" fill="url(#rb)"/><rect x="610.25" y="983.30" width="2" height="7.90" fill="#f0eeee"/><rect x="612.25" y="980.21" width="2" height="3.09" fill="#006b50"/><rect x="613.85" y="983.3" width="2" height="24.20" fill="url(#rb)"/><rect x="615.93" y="983.30" width="2" height="7.90" fill="#f0eeee"/><rect x="617.93" y="972.00" width="2" height="11.30" fill="#006b50"/><rect x="619.53" y="983.3" width="2" height="26.20" fill="url(#rb)"/><rect x="623.61" y="976.82" width="2" height="6.48" fill="#006b50"/><rect x="625.21" y="983.3" width="2" height="5.61" fill="url(#rb)"/><rect x="627.29" y="979.42" width="2" height="3.88" fill="#f0eeee"/><rect x="629.29" y="973.00" width="2" height="10.30" fill="#006b50"/><rect x="630.89" y="983.3" width="2" height="17.70" fill="url(#rb)"/><rect x="632.97" y="981.26" width="2" height="2.04" fill="#f0eeee"/><rect x="634.97" y="978.06" width="2" height="5.24" fill="#006b50"/><rect x="636.57" y="983.3" width="2" height="27.20" fill="url(#rb)"/><rect x="638.66" y="981.74" width="2" height="1.56" fill="#f0eeee"/><rect x="640.66" y="978.10" width="2" height="5.20" fill="#006b50"/><rect x="642.26" y="983.3" width="2" height="3.06" fill="url(#rb)"/><rect x="644.34" y="979.42" width="2" height="3.88" fill="#f0eeee"/><rect x="646.34" y="979.58" width="2" height="3.72" fill="#006b50"/><rect x="647.94" y="983.3" width="2" height="5.23" fill="url(#rb)"/><rect x="650.02" y="980.33" width="2" height="2.97" fill="#f0eeee"/><rect x="652.02" y="979.24" width="2" height="4.06" fill="#006b50"/><rect x="655.70" y="982.33" width="2" height="0.97" fill="#f0eeee"/><rect x="657.70" y="977.27" width="2" height="6.03" fill="#006b50"/><rect x="659.30" y="983.3" width="2" height="12.70" fill="url(#rb)"/><rect x="661.38" y="979.84" width="2" height="3.46" fill="#f0eeee"/><rect x="663.38" y="978.71" width="2" height="4.59" fill="#006b50"/><rect x="664.98" y="983.3" width="2" height="2.82" fill="url(#rb)"/><rect x="667.06" y="982.10" width="2" height="1.20" fill="#f0eeee"/><rect x="669.06" y="978.47" width="2" height="4.83" fill="#006b50"/><rect x="670.66" y="983.3" width="2" height="1.10" fill="url(#rb)"/><rect x="672.74" y="982.17" width="2" height="1.13" fill="#f0eeee"/><rect x="674.74" y="977.85" width="2" height="5.45" fill="#006b50"/><rect x="676.34" y="983.3" width="2" height="11.97" fill="url(#rb)"/><rect x="680.42" y="979.52" width="2" height="3.78" fill="#006b50"/><rect x="682.02" y="983.3" width="2" height="3.57" fill="url(#rb)"/><rect x="684.10" y="980.67" width="2" height="2.63" fill="#f0eeee"/><rect x="686.10" y="977.55" width="2" height="5.75" fill="#006b50"/><rect x="687.70" y="983.3" width="2" height="4.03" fill="url(#rb)"/><rect x="689.78" y="982.40" width="2" height="0.90" fill="#f0eeee"/><rect x="691.78" y="977.74" width="2" height="5.56" fill="#006b50"/><rect x="693.38" y="983.3" width="2" height="11.20" fill="url(#rb)"/><rect x="697.46" y="974.27" width="2" height="9.03" fill="#006b50"/><rect x="699.06" y="983.3" width="2" height="4.09" fill="url(#rb)"/><rect x="701.14" y="981.78" width="2" height="1.52" fill="#f0eeee"/><rect x="703.14" y="980.83" width="2" height="2.47" fill="#006b50"/><rect x="704.74" y="983.3" width="2" height="7.71" fill="url(#rb)"/><rect x="706.82" y="957.00" width="2" height="26.30" fill="#f0eeee"/><rect x="708.82" y="941.20" width="2" height="42.10" fill="#006b50"/><rect x="710.42" y="983.3" width="2" height="4.23" fill="url(#rb)"/><rect x="712.50" y="982.51" width="2" height="0.79" fill="#f0eeee"/><rect x="714.50" y="979.55" width="2" height="3.75" fill="#006b50"/><rect x="716.10" y="983.3" width="2" height="7.91" fill="url(#rb)"/><rect x="718.18" y="981.33" width="2" height="1.97" fill="#f0eeee"/><rect x="720.18" y="980.77" width="2" height="2.53" fill="#006b50"/><rect x="721.78" y="983.3" width="2" height="0.94" fill="url(#rb)"/><rect x="723.86" y="982.46" width="2" height="0.84" fill="#f0eeee"/><rect x="725.86" y="978.70" width="2" height="4.60" fill="#006b50"/><rect x="727.46" y="983.3" width="2" height="14.20" fill="url(#rb)"/><rect x="729.54" y="980.61" width="2" height="2.69" fill="#f0eeee"/><rect x="731.54" y="979.36" width="2" height="3.94" fill="#006b50"/><rect x="733.14" y="983.3" width="2" height="1.20" fill="url(#rb)"/><rect x="735.23" y="981.97" width="2" height="1.33" fill="#f0eeee"/><rect x="737.23" y="979.31" width="2" height="3.99" fill="#006b50"/><rect x="738.83" y="983.3" width="2" height="10.19" fill="url(#rb)"/><rect x="740.91" y="982.54" width="2" height="0.76" fill="#f0eeee"/><rect x="742.91" y="981.12" width="2" height="2.18" fill="#006b50"/><rect x="744.51" y="983.3" width="2" height="1.69" fill="url(#rb)"/><rect x="746.59" y="982.80" width="2" height="0.50" fill="#f0eeee"/><rect x="748.59" y="977.18" width="2" height="6.12" fill="#006b50"/><rect x="750.19" y="983.3" width="2" height="8.15" fill="url(#rb)"/><rect x="752.27" y="982.32" width="2" height="0.98" fill="#f0eeee"/><rect x="754.27" y="977.15" width="2" height="6.15" fill="#006b50"/><rect x="755.87" y="983.3" width="2" height="2.38" fill="url(#rb)"/><rect x="757.95" y="982.64" width="2" height="0.66" fill="#f0eeee"/><rect x="759.95" y="980.61" width="2" height="2.69" fill="#006b50"/><rect x="761.55" y="983.3" width="2" height="3.29" fill="url(#rb)"/><rect x="763.63" y="980.92" width="2" height="2.38" fill="#f0eeee"/><rect x="765.63" y="980.16" width="2" height="3.14" fill="#006b50"/><rect x="767.23" y="983.3" width="2" height="10.55" fill="url(#rb)"/><rect x="769.31" y="979.21" width="2" height="4.09" fill="#f0eeee"/><rect x="771.31" y="980.57" width="2" height="2.73" fill="#006b50"/><rect x="772.91" y="983.3" width="2" height="17.20" fill="url(#rb)"/><rect x="774.99" y="981.48" width="2" height="1.82" fill="#f0eeee"/><rect x="776.99" y="978.78" width="2" height="4.52" fill="#006b50"/><rect x="778.59" y="983.3" width="2" height="1.87" fill="url(#rb)"/><rect x="780.67" y="981.35" width="2" height="1.95" fill="#f0eeee"/><rect x="782.67" y="977.00" width="2" height="6.30" fill="#006b50"/><rect x="784.27" y="983.3" width="2" height="4.00" fill="url(#rb)"/><rect x="786.35" y="983.30" width="2" height="5.16" fill="#f0eeee"/><rect x="788.35" y="980.20" width="2" height="3.10" fill="#006b50"/><rect x="789.95" y="983.3" width="2" height="9.21" fill="url(#rb)"/><rect x="794.03" y="978.63" width="2" height="4.67" fill="#006b50"/><rect x="795.63" y="983.3" width="2" height="5.27" fill="url(#rb)"/><rect x="797.71" y="983.30" width="2" height="1.35" fill="#f0eeee"/><rect x="799.71" y="975.42" width="2" height="7.88" fill="#006b50"/><rect x="801.31" y="983.3" width="2" height="2.87" fill="url(#rb)"/><rect x="803.39" y="982.10" width="2" height="1.20" fill="#f0eeee"/><rect x="805.39" y="980.71" width="2" height="2.59" fill="#006b50"/><rect x="806.99" y="983.3" width="2" height="1.06" fill="url(#rb)"/><rect x="809.07" y="979.47" width="2" height="3.83" fill="#f0eeee"/><rect x="811.07" y="974.17" width="2" height="9.13" fill="#006b50"/><rect x="812.67" y="983.3" width="2" height="5.69" fill="url(#rb)"/><rect x="814.75" y="981.15" width="2" height="2.15" fill="#f0eeee"/><rect x="816.75" y="980.22" width="2" height="3.08" fill="#006b50"/><rect x="818.35" y="983.3" width="2" height="1.37" fill="url(#rb)"/><rect x="820.43" y="983.30" width="2" height="3.91" fill="#f0eeee"/><rect x="822.43" y="977.22" width="2" height="6.08" fill="#006b50"/><rect x="824.03" y="983.3" width="2" height="2.66" fill="url(#rb)"/><rect x="826.11" y="980.38" width="2" height="2.92" fill="#f0eeee"/><rect x="828.11" y="979.96" width="2" height="3.34" fill="#006b50"/><rect x="829.71" y="983.3" width="2" height="1.40" fill="url(#rb)"/><rect x="831.80" y="982.46" width="2" height="0.84" fill="#f0eeee"/><rect x="833.80" y="979.28" width="2" height="4.02" fill="#006b50"/><rect x="837.48" y="982.75" width="2" height="0.55" fill="#f0eeee"/><rect x="839.48" y="978.29" width="2" height="5.01" fill="#006b50"/><rect x="841.08" y="983.3" width="2" height="6.93" fill="url(#rb)"/><rect x="843.16" y="981.18" width="2" height="2.12" fill="#f0eeee"/><rect x="845.16" y="980.15" width="2" height="3.15" fill="#006b50"/><rect x="846.76" y="983.3" width="2" height="9.05" fill="url(#rb)"/><rect x="850.84" y="978.07" width="2" height="5.23" fill="#006b50"/><rect x="852.44" y="983.3" width="2" height="7.22" fill="url(#rb)"/><rect x="854.52" y="982.39" width="2" height="0.91" fill="#f0eeee"/><rect x="856.52" y="978.30" width="2" height="5.00" fill="#006b50"/><rect x="858.12" y="983.3" width="2" height="9.16" fill="url(#rb)"/><rect x="860.20" y="980.15" width="2" height="3.15" fill="#f0eeee"/><rect x="862.20" y="978.16" width="2" height="5.14" fill="#006b50"/><rect x="863.80" y="983.3" width="2" height="3.57" fill="url(#rb)"/><rect x="865.88" y="982.59" width="2" height="0.71" fill="#f0eeee"/><rect x="867.88" y="972.94" width="2" height="10.36" fill="#006b50"/><rect x="871.56" y="980.17" width="2" height="3.13" fill="#f0eeee"/><rect x="873.56" y="974.40" width="2" height="8.90" fill="#006b50"/><rect x="875.16" y="983.3" width="2" height="4.03" fill="url(#rb)"/><rect x="877.24" y="982.43" width="2" height="0.87" fill="#f0eeee"/><rect x="879.24" y="976.07" width="2" height="7.23" fill="#006b50"/><rect x="880.84" y="983.3" width="2" height="14.99" fill="url(#rb)"/><rect x="882.92" y="980.40" width="2" height="2.90" fill="#f0eeee"/><rect x="884.92" y="976.54" width="2" height="6.76" fill="#006b50"/><rect x="886.52" y="983.3" width="2" height="7.32" fill="url(#rb)"/><rect x="890.60" y="978.20" width="2" height="5.10" fill="#006b50"/><rect x="892.20" y="983.3" width="2" height="3.68" fill="url(#rb)"/><rect x="894.28" y="983.30" width="2" height="3.26" fill="#f0eeee"/><rect x="896.28" y="979.41" width="2" height="3.89" fill="#006b50"/><rect x="897.88" y="983.3" width="2" height="3.89" fill="url(#rb)"/><rect x="899.96" y="982.05" width="2" height="1.25" fill="#f0eeee"/><rect x="901.96" y="977.74" width="2" height="5.56" fill="#006b50"/><rect x="903.56" y="983.3" width="2" height="1.01" fill="url(#rb)"/><rect x="907.64" y="977.84" width="2" height="5.46" fill="#006b50"/><rect x="909.24" y="983.3" width="2" height="5.12" fill="url(#rb)"/><rect x="911.32" y="981.87" width="2" height="1.43" fill="#f0eeee"/><rect x="913.32" y="980.37" width="2" height="2.93" fill="#006b50"/><rect x="914.92" y="983.3" width="2" height="1.31" fill="url(#rb)"/><rect x="917.00" y="980.16" width="2" height="3.14" fill="#f0eeee"/><rect x="919.00" y="979.76" width="2" height="3.54" fill="#006b50"/><rect x="920.60" y="983.3" width="2" height="1.48" fill="url(#rb)"/><rect x="924.68" y="979.13" width="2" height="4.17" fill="#006b50"/><rect x="926.28" y="983.3" width="2" height="8.37" fill="url(#rb)"/><rect x="928.37" y="980.81" width="2" height="2.49" fill="#f0eeee"/><rect x="930.37" y="978.50" width="2" height="4.80" fill="#006b50"/><rect x="931.97" y="983.3" width="2" height="3.72" fill="url(#rb)"/><rect x="934.05" y="980.29" width="2" height="3.01" fill="#f0eeee"/><rect x="936.05" y="979.40" width="2" height="3.90" fill="#006b50"/><rect x="937.65" y="983.3" width="2" height="5.83" fill="url(#rb)"/><rect x="941.73" y="978.25" width="2" height="5.05" fill="#006b50"/><rect x="943.33" y="983.3" width="2" height="2.29" fill="url(#rb)"/><rect x="945.41" y="981.61" width="2" height="1.69" fill="#f0eeee"/><rect x="947.41" y="979.88" width="2" height="3.42" fill="#006b50"/><rect x="949.01" y="983.3" width="2" height="1.60" fill="url(#rb)"/><rect x="951.09" y="982.50" width="2" height="0.80" fill="#f0eeee"/><rect x="953.09" y="977.85" width="2" height="5.45" fill="#006b50"/><rect x="954.69" y="983.3" width="2" height="4.63" fill="url(#rb)"/><rect x="956.77" y="983.30" width="2" height="3.20" fill="#f0eeee"/><rect x="958.77" y="977.87" width="2" height="5.43" fill="#006b50"/><rect x="960.37" y="983.3" width="2" height="5.17" fill="url(#rb)"/><rect x="962.45" y="982.34" width="2" height="0.96" fill="#f0eeee"/><rect x="964.45" y="978.09" width="2" height="5.21" fill="#006b50"/><rect x="966.05" y="983.3" width="2" height="4.59" fill="url(#rb)"/><rect x="968.13" y="982.58" width="2" height="0.72" fill="#f0eeee"/><rect x="970.13" y="977.94" width="2" height="5.36" fill="#006b50"/><rect x="971.73" y="983.3" width="2" height="8.11" fill="url(#rb)"/><rect x="973.81" y="981.11" width="2" height="2.19" fill="#f0eeee"/><rect x="975.81" y="980.87" width="2" height="2.43" fill="#006b50"/><rect x="977.41" y="983.3" width="2" height="7.52" fill="url(#rb)"/><rect x="979.49" y="981.92" width="2" height="1.38" fill="#f0eeee"/><rect x="981.49" y="978.60" width="2" height="4.70" fill="#006b50"/><rect x="983.09" y="983.3" width="2" height="6.63" fill="url(#rb)"/><rect x="985.17" y="980.32" width="2" height="2.98" fill="#f0eeee"/><rect x="987.17" y="979.18" width="2" height="4.12" fill="#006b50"/><rect x="988.77" y="983.3" width="2" height="1.32" fill="url(#rb)"/><rect x="990.85" y="983.30" width="2" height="7.20" fill="#f0eeee"/><rect x="992.85" y="980.86" width="2" height="2.44" fill="#006b50"/><rect x="994.45" y="983.3" width="2" height="20.40" fill="url(#rb)"/><rect x="996.53" y="980.38" width="2" height="2.92" fill="#f0eeee"/><rect x="998.53" y="979.52" width="2" height="3.78" fill="#006b50"/><rect x="1000.13" y="983.3" width="2" height="17.20" fill="url(#rb)"/><rect x="1002.21" y="982.32" width="2" height="0.98" fill="#f0eeee"/><rect x="1004.21" y="976.00" width="2" height="7.30" fill="#006b50"/><rect x="1005.81" y="983.3" width="2" height="12.13" fill="url(#rb)"/><rect x="1007.89" y="980.15" width="2" height="3.15" fill="#f0eeee"/><rect x="1009.89" y="980.33" width="2" height="2.97" fill="#006b50"/><rect x="1011.49" y="983.3" width="2" height="8.84" fill="url(#rb)"/><rect x="1013.57" y="979.75" width="2" height="3.55" fill="#f0eeee"/><rect x="1015.57" y="980.74" width="2" height="2.56" fill="#006b50"/><rect x="1017.17" y="983.3" width="2" height="7.75" fill="url(#rb)"/><rect x="1019.25" y="983.30" width="2" height="6.70" fill="#f0eeee"/><rect x="1021.25" y="978.53" width="2" height="4.77" fill="#006b50"/><rect x="1022.85" y="983.3" width="2" height="7.81" fill="url(#rb)"/><rect x="1024.94" y="982.47" width="2" height="0.83" fill="#f0eeee"/><rect x="1026.94" y="975.00" width="2" height="8.30" fill="#006b50"/><rect x="1028.54" y="983.3" width="2" height="4.14" fill="url(#rb)"/><rect x="1030.62" y="982.58" width="2" height="0.72" fill="#f0eeee"/><rect x="1032.62" y="980.24" width="2" height="3.06" fill="#006b50"/><rect x="1034.22" y="983.3" width="2" height="5.00" fill="url(#rb)"/><rect x="1036.30" y="983.30" width="2" height="21.20" fill="#f0eeee"/><rect x="1038.30" y="973.37" width="2" height="9.93" fill="#006b50"/><rect x="1039.90" y="983.3" width="2" height="29.20" fill="url(#rb)"/><rect x="1041.98" y="983.30" width="2" height="1.39" fill="#f0eeee"/><rect x="1043.98" y="972.00" width="2" height="11.30" fill="#006b50"/><rect x="1045.58" y="983.3" width="2" height="25.90" fill="url(#rb)"/><rect x="1047.66" y="979.84" width="2" height="3.46" fill="#f0eeee"/><rect x="1049.66" y="970.00" width="2" height="13.30" fill="#006b50"/><rect x="1051.26" y="983.3" width="2" height="2.40" fill="url(#rb)"/><rect x="1053.34" y="979.83" width="2" height="3.47" fill="#f0eeee"/><rect x="1055.34" y="977.88" width="2" height="5.42" fill="#006b50"/><rect x="1056.94" y="983.3" width="2" height="2.65" fill="url(#rb)"/><rect x="1059.02" y="979.98" width="2" height="3.32" fill="#f0eeee"/><rect x="1061.02" y="978.89" width="2" height="4.41" fill="#006b50"/><rect x="1062.62" y="983.3" width="2" height="2.95" fill="url(#rb)"/><rect x="1064.70" y="983.30" width="2" height="11.20" fill="#f0eeee"/><rect x="1066.70" y="979.17" width="2" height="4.13" fill="#006b50"/><rect x="1068.30" y="983.3" width="2" height="19.90" fill="url(#rb)"/><rect x="1070.38" y="981.06" width="2" height="2.24" fill="#f0eeee"/><rect x="1072.38" y="977.65" width="2" height="5.65" fill="#006b50"/><rect x="1073.98" y="983.3" width="2" height="1.06" fill="url(#rb)"/><rect x="1076.06" y="982.69" width="2" height="0.61" fill="#f0eeee"/><rect x="1078.06" y="977.26" width="2" height="6.04" fill="#006b50"/><rect x="1079.66" y="983.3" width="2" height="9.19" fill="url(#rb)"/><rect x="1081.74" y="982.58" width="2" height="0.72" fill="#f0eeee"/><rect x="1083.74" y="979.83" width="2" height="3.47" fill="#006b50"/><rect x="1085.34" y="983.3" width="2" height="4.05" fill="url(#rb)"/><rect x="1089.42" y="978.90" width="2" height="4.40" fill="#006b50"/><rect x="1091.02" y="983.3" width="2" height="3.44" fill="url(#rb)"/><rect x="1093.10" y="980.92" width="2" height="2.38" fill="#f0eeee"/><rect x="1095.10" y="977.07" width="2" height="6.23" fill="#006b50"/><rect x="1096.70" y="983.3" width="2" height="7.60" fill="url(#rb)"/><rect x="1098.78" y="981.72" width="2" height="1.58" fill="#f0eeee"/><rect x="1100.78" y="973.83" width="2" height="9.47" fill="#006b50"/><rect x="1102.38" y="983.3" width="2" height="0.50" fill="url(#rb)"/><rect x="1104.46" y="982.38" width="2" height="0.92" fill="#f0eeee"/><rect x="1106.46" y="978.45" width="2" height="4.85" fill="#006b50"/><rect x="1108.06" y="983.3" width="2" height="8.59" fill="url(#rb)"/><rect x="1110.14" y="980.43" width="2" height="2.87" fill="#f0eeee"/><rect x="1112.14" y="978.35" width="2" height="4.95" fill="#006b50"/><rect x="1113.74" y="983.3" width="2" height="6.56" fill="url(#rb)"/><rect x="1117.82" y="977.34" width="2" height="5.96" fill="#006b50"/><rect x="1119.42" y="983.3" width="2" height="4.08" fill="url(#rb)"/><rect x="1121.51" y="980.69" width="2" height="2.61" fill="#f0eeee"/><rect x="1123.51" y="979.47" width="2" height="3.83" fill="#006b50"/><rect x="1125.11" y="983.3" width="2" height="4.59" fill="url(#rb)"/><rect x="1127.19" y="983.30" width="2" height="1.89" fill="#f0eeee"/><rect x="1129.19" y="977.79" width="2" height="5.51" fill="#006b50"/><rect x="1130.79" y="983.3" width="2" height="0.65" fill="url(#rb)"/><rect x="1132.87" y="980.57" width="2" height="2.73" fill="#f0eeee"/><rect x="1134.87" y="979.24" width="2" height="4.06" fill="#006b50"/><rect x="1136.47" y="983.3" width="2" height="1.85" fill="url(#rb)"/><rect x="1140.55" y="980.77" width="2" height="2.53" fill="#006b50"/><rect x="1142.15" y="983.3" width="2" height="1.74" fill="url(#rb)"/><rect x="1146.23" y="978.12" width="2" height="5.18" fill="#006b50"/><rect x="1147.83" y="983.3" width="2" height="1.42" fill="url(#rb)"/><rect x="1149.91" y="983.30" width="2" height="5.90" fill="#f0eeee"/><rect x="1151.91" y="978.57" width="2" height="4.73" fill="#006b50"/><rect x="1153.51" y="983.3" width="2" height="4.84" fill="url(#rb)"/><rect x="1155.59" y="983.30" width="2" height="1.40" fill="#f0eeee"/><rect x="1157.59" y="978.48" width="2" height="4.82" fill="#006b50"/><rect x="1159.19" y="983.3" width="2" height="1.66" fill="url(#rb)"/><rect x="1161.27" y="982.25" width="2" height="1.05" fill="#f0eeee"/><rect x="1163.27" y="981.04" width="2" height="2.26" fill="#006b50"/><rect x="1164.87" y="983.3" width="2" height="5.79" fill="url(#rb)"/><rect x="1166.95" y="982.33" width="2" height="0.97" fill="#f0eeee"/><rect x="1168.95" y="978.50" width="2" height="4.80" fill="#006b50"/><rect x="1170.55" y="983.3" width="2" height="4.49" fill="url(#rb)"/><rect x="1172.63" y="979.18" width="2" height="4.12" fill="#f0eeee"/><rect x="1174.63" y="972.74" width="2" height="10.56" fill="#006b50"/><rect x="1176.23" y="983.3" width="2" height="6.86" fill="url(#rb)"/><rect x="1178.31" y="980.52" width="2" height="2.78" fill="#f0eeee"/><rect x="1180.31" y="978.69" width="2" height="4.61" fill="#006b50"/><rect x="1181.91" y="983.3" width="2" height="4.57" fill="url(#rb)"/><rect x="1183.99" y="980.20" width="2" height="3.10" fill="#f0eeee"/><rect x="1185.99" y="977.80" width="2" height="5.50" fill="#006b50"/><rect x="1187.59" y="983.3" width="2" height="1.01" fill="url(#rb)"/><rect x="1189.67" y="980.59" width="2" height="2.71" fill="#f0eeee"/><rect x="1191.67" y="981.12" width="2" height="2.18" fill="#006b50"/><rect x="1193.27" y="983.3" width="2" height="7.77" fill="url(#rb)"/><rect x="1195.35" y="981.82" width="2" height="1.48" fill="#f0eeee"/><rect x="1197.35" y="978.33" width="2" height="4.97" fill="#006b50"/><rect x="1198.95" y="983.3" width="2" height="13.03" fill="url(#rb)"/><rect x="1201.03" y="982.11" width="2" height="1.19" fill="#f0eeee"/><rect x="1203.03" y="980.28" width="2" height="3.02" fill="#006b50"/><rect x="1204.63" y="983.3" width="2" height="6.65" fill="url(#rb)"/><rect x="1206.71" y="981.90" width="2" height="1.40" fill="#f0eeee"/><rect x="1208.71" y="973.47" width="2" height="9.83" fill="#006b50"/><rect x="1210.31" y="983.3" width="2" height="7.44" fill="url(#rb)"/><rect x="1212.39" y="979.37" width="2" height="3.93" fill="#f0eeee"/><rect x="1214.39" y="979.23" width="2" height="4.07" fill="#006b50"/><rect x="1215.99" y="983.3" width="2" height="2.58" fill="url(#rb)"/><rect x="1218.07" y="980.14" width="2" height="3.16" fill="#f0eeee"/><rect x="1220.07" y="979.55" width="2" height="3.75" fill="#006b50"/><rect x="1221.67" y="983.3" width="2" height="15.99" fill="url(#rb)"/><rect x="1223.76" y="982.48" width="2" height="0.82" fill="#f0eeee"/><rect x="1225.76" y="980.62" width="2" height="2.68" fill="#006b50"/><rect x="1229.44" y="983.30" width="2" height="7.20" fill="#f0eeee"/><rect x="1231.44" y="978.84" width="2" height="4.46" fill="#006b50"/><rect x="1233.04" y="983.3" width="2" height="14.20" fill="url(#rb)"/><rect x="1235.12" y="979.88" width="2" height="3.42" fill="#f0eeee"/><rect x="1237.12" y="976.09" width="2" height="7.21" fill="#006b50"/><rect x="1238.72" y="983.3" width="2" height="19.90" fill="url(#rb)"/><rect x="1240.80" y="979.47" width="2" height="3.83" fill="#f0eeee"/><rect x="1242.80" y="974.37" width="2" height="8.93" fill="#006b50"/><rect x="1244.40" y="983.3" width="2" height="15.74" fill="url(#rb)"/><rect x="1246.48" y="980.68" width="2" height="2.62" fill="#f0eeee"/><rect x="1248.48" y="978.40" width="2" height="4.90" fill="#006b50"/><rect x="1250.08" y="983.3" width="2" height="4.74" fill="url(#rb)"/><rect x="1254.16" y="979.77" width="2" height="3.53" fill="#006b50"/><rect x="1255.76" y="983.3" width="2" height="1.31" fill="url(#rb)"/><rect x="1257.84" y="980.11" width="2" height="3.19" fill="#f0eeee"/><rect x="1259.84" y="981.06" width="2" height="2.24" fill="#006b50"/><rect x="1261.44" y="983.3" width="2" height="7.29" fill="url(#rb)"/><rect x="1263.52" y="981.72" width="2" height="1.58" fill="#f0eeee"/><rect x="1265.52" y="980.84" width="2" height="2.46" fill="#006b50"/><rect x="1267.12" y="983.3" width="2" height="3.14" fill="url(#rb)"/><rect x="1271.20" y="981.24" width="2" height="2.06" fill="#006b50"/><rect x="1272.80" y="983.3" width="2" height="15.53" fill="url(#rb)"/><rect x="1274.88" y="979.22" width="2" height="4.08" fill="#f0eeee"/><rect x="1276.88" y="980.69" width="2" height="2.61" fill="#006b50"/><rect x="1278.48" y="983.3" width="2" height="1.81" fill="url(#rb)"/><rect x="1280.56" y="980.43" width="2" height="2.87" fill="#f0eeee"/><rect x="1282.56" y="977.73" width="2" height="5.57" fill="#006b50"/><rect x="1284.16" y="983.3" width="2" height="6.24" fill="url(#rb)"/><rect x="1286.24" y="982.68" width="2" height="0.62" fill="#f0eeee"/><rect x="1288.24" y="980.67" width="2" height="2.63" fill="#006b50"/><rect x="1289.84" y="983.3" width="2" height="3.22" fill="url(#rb)"/><rect x="1291.92" y="981.83" width="2" height="1.47" fill="#f0eeee"/><rect x="1293.92" y="980.57" width="2" height="2.73" fill="#006b50"/><rect x="1295.52" y="983.3" width="2" height="1.63" fill="url(#rb)"/><rect x="1297.60" y="982.68" width="2" height="0.62" fill="#f0eeee"/><rect x="1299.60" y="980.38" width="2" height="2.92" fill="#006b50"/><rect x="1301.20" y="983.3" width="2" height="3.39" fill="url(#rb)"/><rect x="1303.28" y="981.47" width="2" height="1.83" fill="#f0eeee"/><rect x="1305.28" y="975.71" width="2" height="7.59" fill="#006b50"/><rect x="1306.88" y="983.3" width="2" height="14.18" fill="url(#rb)"/><rect x="1308.96" y="982.49" width="2" height="0.81" fill="#f0eeee"/><rect x="1310.96" y="973.36" width="2" height="9.94" fill="#006b50"/><rect x="1312.56" y="983.3" width="2" height="5.39" fill="url(#rb)"/><rect x="1314.64" y="982.73" width="2" height="0.57" fill="#f0eeee"/><rect x="1316.64" y="980.52" width="2" height="2.78" fill="#006b50"/><rect x="1320.33" y="980.50" width="2" height="2.80" fill="#f0eeee"/><rect x="1322.33" y="980.41" width="2" height="2.89" fill="#006b50"/><rect x="1323.93" y="983.3" width="2" height="6.90" fill="url(#rb)"/><rect x="1326.01" y="982.57" width="2" height="0.73" fill="#f0eeee"/><rect x="1328.01" y="973.45" width="2" height="9.85" fill="#006b50"/><rect x="1329.61" y="983.3" width="2" height="3.80" fill="url(#rb)"/><rect x="1331.69" y="982.39" width="2" height="0.91" fill="#f0eeee"/><rect x="1333.69" y="977.52" width="2" height="5.78" fill="#006b50"/><rect x="1335.29" y="983.3" width="2" height="2.55" fill="url(#rb)"/><rect x="1337.37" y="982.26" width="2" height="1.04" fill="#f0eeee"/><rect x="1339.37" y="981.28" width="2" height="2.02" fill="#006b50"/><rect x="1340.97" y="983.3" width="2" height="4.72" fill="url(#rb)"/><rect x="1343.05" y="980.09" width="2" height="3.21" fill="#f0eeee"/><rect x="1345.05" y="979.91" width="2" height="3.39" fill="#006b50"/><rect x="1346.65" y="983.3" width="2" height="1.46" fill="url(#rb)"/><rect x="1348.73" y="979.15" width="2" height="4.15" fill="#f0eeee"/><rect x="1350.73" y="979.00" width="2" height="4.30" fill="#006b50"/><rect x="1352.33" y="983.3" width="2" height="1.17" fill="url(#rb)"/><rect x="1356.41" y="973.93" width="2" height="9.37" fill="#006b50"/><rect x="1358.01" y="983.3" width="2" height="13.34" fill="url(#rb)"/><rect x="1360.09" y="980.84" width="2" height="2.46" fill="#f0eeee"/><rect x="1362.09" y="977.53" width="2" height="5.77" fill="#006b50"/><rect x="1363.69" y="983.3" width="2" height="1.38" fill="url(#rb)"/><rect x="1365.77" y="980.93" width="2" height="2.37" fill="#f0eeee"/><rect x="1367.77" y="979.54" width="2" height="3.76" fill="#006b50"/><rect x="1369.37" y="983.3" width="2" height="5.93" fill="url(#rb)"/><rect x="1371.45" y="980.65" width="2" height="2.65" fill="#f0eeee"/><rect x="1373.45" y="977.72" width="2" height="5.58" fill="#006b50"/><rect x="1375.05" y="983.3" width="2" height="4.24" fill="url(#rb)"/><rect x="1377.13" y="980.83" width="2" height="2.47" fill="#f0eeee"/><rect x="1379.13" y="977.93" width="2" height="5.37" fill="#006b50"/><rect x="1380.73" y="983.3" width="2" height="3.00" fill="url(#rb)"/><rect x="1382.81" y="979.04" width="2" height="4.26" fill="#f0eeee"/><rect x="1384.81" y="977.77" width="2" height="5.53" fill="#006b50"/><rect x="1386.41" y="983.3" width="2" height="1.45" fill="url(#rb)"/><rect x="1390.49" y="979.72" width="2" height="3.58" fill="#006b50"/><rect x="1392.09" y="983.3" width="2" height="1.58" fill="url(#rb)"/><rect x="1394.17" y="982.33" width="2" height="0.97" fill="#f0eeee"/><rect x="1396.17" y="977.24" width="2" height="6.06" fill="#006b50"/><rect x="1397.77" y="983.3" width="2" height="7.75" fill="url(#rb)"/><rect x="1399.85" y="982.76" width="2" height="0.54" fill="#f0eeee"/><rect x="1401.85" y="978.36" width="2" height="4.94" fill="#006b50"/><rect x="1403.45" y="983.3" width="2" height="5.52" fill="url(#rb)"/><rect x="1405.53" y="981.91" width="2" height="1.39" fill="#f0eeee"/><rect x="1407.53" y="977.18" width="2" height="6.12" fill="#006b50"/><rect x="1409.13" y="983.3" width="2" height="3.55" fill="url(#rb)"/><rect x="1411.21" y="980.56" width="2" height="2.74" fill="#f0eeee"/><rect x="1413.21" y="980.14" width="2" height="3.16" fill="#006b50"/><rect x="1414.81" y="983.3" width="2" height="5.45" fill="url(#rb)"/><rect x="1416.90" y="982.38" width="2" height="0.92" fill="#f0eeee"/><rect x="1418.90" y="980.05" width="2" height="3.25" fill="#006b50"/><rect x="1420.50" y="983.3" width="2" height="1.73" fill="url(#rb)"/><rect x="1422.58" y="980.50" width="2" height="2.80" fill="#f0eeee"/><rect x="1424.58" y="980.43" width="2" height="2.87" fill="#006b50"/><rect x="1426.18" y="983.3" width="2" height="4.84" fill="url(#rb)"/><rect x="1428.26" y="981.05" width="2" height="2.25" fill="#f0eeee"/><rect x="1430.26" y="980.34" width="2" height="2.96" fill="#006b50"/><rect x="1431.86" y="983.3" width="2" height="0.59" fill="url(#rb)"/><rect x="1433.94" y="982.74" width="2" height="0.56" fill="#f0eeee"/><rect x="1435.94" y="980.06" width="2" height="3.24" fill="#006b50"/><rect x="1437.54" y="983.3" width="2" height="3.46" fill="url(#rb)"/><rect x="1439.62" y="982.64" width="2" height="0.66" fill="#f0eeee"/><rect x="1441.62" y="981.03" width="2" height="2.27" fill="#006b50"/><rect x="1445.30" y="979.12" width="2" height="4.18" fill="#f0eeee"/><rect x="1447.30" y="979.84" width="2" height="3.46" fill="#006b50"/><rect x="1448.90" y="983.3" width="2" height="6.63" fill="url(#rb)"/><rect x="1450.98" y="979.67" width="2" height="3.63" fill="#f0eeee"/><rect x="1452.98" y="978.08" width="2" height="5.22" fill="#006b50"/><rect x="1454.58" y="983.3" width="2" height="12.20" fill="url(#rb)"/><rect x="1456.66" y="983.30" width="2" height="4.91" fill="#f0eeee"/><rect x="1458.66" y="978.76" width="2" height="4.54" fill="#006b50"/><rect x="1460.26" y="983.3" width="2" height="9.03" fill="url(#rb)"/><rect x="1462.34" y="979.82" width="2" height="3.48" fill="#f0eeee"/><rect x="1464.34" y="979.65" width="2" height="3.65" fill="#006b50"/><rect x="1465.94" y="983.3" width="2" height="4.82" fill="url(#rb)"/><rect x="1468.02" y="981.36" width="2" height="1.94" fill="#f0eeee"/><rect x="1470.02" y="979.90" width="2" height="3.40" fill="#006b50"/><rect x="1471.62" y="983.3" width="2" height="8.08" fill="url(#rb)"/><rect x="1473.70" y="982.17" width="2" height="1.13" fill="#f0eeee"/><rect x="1475.70" y="978.80" width="2" height="4.50" fill="#006b50"/><rect x="1477.30" y="983.3" width="2" height="1.73" fill="url(#rb)"/><rect x="1479.38" y="979.58" width="2" height="3.72" fill="#f0eeee"/><rect x="1481.38" y="980.41" width="2" height="2.89" fill="#006b50"/><rect x="1482.98" y="983.3" width="2" height="9.65" fill="url(#rb)"/><rect x="1485.06" y="980.94" width="2" height="2.36" fill="#f0eeee"/><rect x="1487.06" y="978.96" width="2" height="4.34" fill="#006b50"/><rect x="1488.66" y="983.3" width="2" height="5.31" fill="url(#rb)"/><rect x="1490.74" y="981.37" width="2" height="1.93" fill="#f0eeee"/><rect x="1492.74" y="979.78" width="2" height="3.52" fill="#006b50"/><rect x="1494.34" y="983.3" width="2" height="0.62" fill="url(#rb)"/><rect x="1496.42" y="981.32" width="2" height="1.98" fill="#f0eeee"/><rect x="1498.42" y="977.48" width="2" height="5.82" fill="#006b50"/><rect x="1500.02" y="983.3" width="2" height="5.06" fill="url(#rb)"/><rect x="1502.10" y="978.98" width="2" height="4.32" fill="#f0eeee"/><rect x="1504.10" y="977.76" width="2" height="5.54" fill="#006b50"/><rect x="1505.70" y="983.3" width="2" height="15.40" fill="url(#rb)"/><rect x="1507.78" y="983.30" width="2" height="5.40" fill="#f0eeee"/><rect x="1509.78" y="975.00" width="2" height="8.30" fill="#006b50"/><rect x="1511.38" y="983.3" width="2" height="8.41" fill="url(#rb)"/><rect x="1513.47" y="981.76" width="2" height="1.54" fill="#f0eeee"/><rect x="1515.47" y="980.48" width="2" height="2.82" fill="#006b50"/><rect x="1517.07" y="983.3" width="2" height="6.25" fill="url(#rb)"/><rect x="1519.15" y="983.30" width="2" height="3.25" fill="#f0eeee"/><rect x="1521.15" y="977.88" width="2" height="5.42" fill="#006b50"/><rect x="1522.75" y="983.3" width="2" height="11.37" fill="url(#rb)"/><rect x="1524.83" y="980.59" width="2" height="2.71" fill="#f0eeee"/><rect x="1526.83" y="979.14" width="2" height="4.16" fill="#006b50"/><rect x="1528.43" y="983.3" width="2" height="3.22" fill="url(#rb)"/><rect x="1530.51" y="978.98" width="2" height="4.32" fill="#f0eeee"/><rect x="1532.51" y="980.77" width="2" height="2.53" fill="#006b50"/><rect x="1534.11" y="983.3" width="2" height="10.01" fill="url(#rb)"/><rect x="1536.19" y="980.84" width="2" height="2.46" fill="#f0eeee"/><rect x="1538.19" y="976.91" width="2" height="6.39" fill="#006b50"/><rect x="1539.79" y="983.3" width="2" height="15.40" fill="url(#rb)"/><rect x="1543.87" y="977.38" width="2" height="5.92" fill="#006b50"/><rect x="1545.47" y="983.3" width="2" height="3.91" fill="url(#rb)"/><rect x="1547.55" y="982.68" width="2" height="0.62" fill="#f0eeee"/><rect x="1549.55" y="977.14" width="2" height="6.16" fill="#006b50"/><rect x="1551.15" y="983.3" width="2" height="1.55" fill="url(#rb)"/><rect x="1553.23" y="979.54" width="2" height="3.76" fill="#f0eeee"/><rect x="1555.23" y="977.76" width="2" height="5.54" fill="#006b50"/><rect x="1556.83" y="983.3" width="2" height="6.02" fill="url(#rb)"/><rect x="1560.91" y="980.34" width="2" height="2.96" fill="#006b50"/><rect x="1562.51" y="983.3" width="2" height="8.30" fill="url(#rb)"/><rect x="1566.59" y="977.09" width="2" height="6.21" fill="#006b50"/><rect x="1568.19" y="983.3" width="2" height="12.90" fill="url(#rb)"/><rect x="1572.27" y="979.78" width="2" height="3.52" fill="#006b50"/><rect x="1573.87" y="983.3" width="2" height="2.59" fill="url(#rb)"/><rect x="1575.95" y="982.76" width="2" height="0.54" fill="#f0eeee"/><rect x="1577.95" y="980.62" width="2" height="2.68" fill="#006b50"/><rect x="1579.55" y="983.3" width="2" height="1.77" fill="url(#rb)"/><rect x="1581.63" y="982.40" width="2" height="0.90" fill="#f0eeee"/><rect x="1583.63" y="977.81" width="2" height="5.49" fill="#006b50"/><rect x="1585.23" y="983.3" width="2" height="3.94" fill="url(#rb)"/><rect x="1587.31" y="982.35" width="2" height="0.95" fill="#f0eeee"/><rect x="1589.31" y="980.31" width="2" height="2.99" fill="#006b50"/><rect x="1590.91" y="983.3" width="2" height="2.09" fill="url(#rb)"/><rect x="1592.99" y="979.36" width="2" height="3.94" fill="#f0eeee"/><rect x="1594.99" y="980.23" width="2" height="3.07" fill="#006b50"/><rect x="1596.59" y="983.3" width="2" height="2.77" fill="url(#rb)"/><rect x="1598.67" y="980.88" width="2" height="2.42" fill="#f0eeee"/><rect x="1600.67" y="977.95" width="2" height="5.35" fill="#006b50"/><rect x="1602.27" y="983.3" width="2" height="6.48" fill="url(#rb)"/><rect x="1606.35" y="979.91" width="2" height="3.39" fill="#006b50"/><rect x="1607.95" y="983.3" width="2" height="1.91" fill="url(#rb)"/><rect x="1610.04" y="983.30" width="2" height="2.79" fill="#f0eeee"/><rect x="1612.04" y="980.32" width="2" height="2.98" fill="#006b50"/><rect x="1613.64" y="983.3" width="2" height="6.98" fill="url(#rb)"/><rect x="1615.72" y="979.32" width="2" height="3.98" fill="#f0eeee"/><rect x="1617.72" y="977.56" width="2" height="5.74" fill="#006b50"/><rect x="1619.32" y="983.3" width="2" height="13.87" fill="url(#rb)"/><rect x="1621.40" y="981.52" width="2" height="1.78" fill="#f0eeee"/><rect x="1623.40" y="978.27" width="2" height="5.03" fill="#006b50"/><rect x="1625.00" y="983.3" width="2" height="8.06" fill="url(#rb)"/><rect x="1627.08" y="982.39" width="2" height="0.91" fill="#f0eeee"/><rect x="1629.08" y="976.79" width="2" height="6.51" fill="#006b50"/><rect x="1630.68" y="983.3" width="2" height="2.35" fill="url(#rb)"/><rect x="1634.76" y="980.52" width="2" height="2.78" fill="#006b50"/><rect x="1636.36" y="983.3" width="2" height="5.75" fill="url(#rb)"/><rect x="1638.44" y="981.19" width="2" height="2.11" fill="#f0eeee"/><rect x="1640.44" y="981.29" width="2" height="2.01" fill="#006b50"/><rect x="1642.04" y="983.3" width="2" height="1.42" fill="url(#rb)"/><rect x="1646.12" y="977.87" width="2" height="5.43" fill="#006b50"/><rect x="1647.72" y="983.3" width="2" height="1.16" fill="url(#rb)"/><rect x="1649.80" y="981.35" width="2" height="1.95" fill="#f0eeee"/><rect x="1651.80" y="972.86" width="2" height="10.44" fill="#006b50"/><rect x="1653.40" y="983.3" width="2" height="4.54" fill="url(#rb)"/><rect x="1655.48" y="979.99" width="2" height="3.31" fill="#f0eeee"/><rect x="1657.48" y="973.94" width="2" height="9.36" fill="#006b50"/><rect x="1659.08" y="983.3" width="2" height="15.40" fill="url(#rb)"/><rect x="1661.16" y="983.30" width="2" height="4.62" fill="#f0eeee"/><rect x="1663.16" y="977.81" width="2" height="5.49" fill="#006b50"/><rect x="1664.76" y="983.3" width="2" height="27.20" fill="url(#rb)"/><rect x="1668.84" y="979.51" width="2" height="3.79" fill="#006b50"/><rect x="1670.44" y="983.3" width="2" height="3.59" fill="url(#rb)"/><rect x="1672.52" y="972.00" width="2" height="11.30" fill="#f0eeee"/><rect x="1674.52" y="960.00" width="2" height="23.30" fill="#006b50"/><rect x="1676.12" y="983.3" width="2" height="3.93" fill="url(#rb)"/><rect x="1678.20" y="982.34" width="2" height="0.96" fill="#f0eeee"/><rect x="1680.20" y="977.76" width="2" height="5.54" fill="#006b50"/><rect x="1681.80" y="983.3" width="2" height="7.34" fill="url(#rb)"/><rect x="1683.88" y="980.54" width="2" height="2.76" fill="#f0eeee"/><rect x="1685.88" y="975.71" width="2" height="7.59" fill="#006b50"/><rect x="1689.56" y="982.12" width="2" height="1.18" fill="#f0eeee"/><rect x="1691.56" y="980.81" width="2" height="2.49" fill="#006b50"/><rect x="1693.16" y="983.3" width="2" height="4.91" fill="url(#rb)"/><rect x="1695.24" y="982.31" width="2" height="0.99" fill="#f0eeee"/><rect x="1697.24" y="980.93" width="2" height="2.37" fill="#006b50"/><rect x="1698.84" y="983.3" width="2" height="0.82" fill="url(#rb)"/><rect x="1700.92" y="983.30" width="2" height="5.63" fill="#f0eeee"/><rect x="1702.92" y="978.50" width="2" height="4.80" fill="#006b50"/><rect x="1704.52" y="983.3" width="2" height="8.80" fill="url(#rb)"/><rect x="1708.61" y="977.66" width="2" height="5.64" fill="#006b50"/><rect x="1710.21" y="983.3" width="2" height="2.55" fill="url(#rb)"/><rect x="1712.29" y="982.51" width="2" height="0.79" fill="#f0eeee"/><rect x="1714.29" y="978.08" width="2" height="5.22" fill="#006b50"/><rect x="1715.89" y="983.3" width="2" height="2.54" fill="url(#rb)"/><rect x="1717.97" y="981.45" width="2" height="1.85" fill="#f0eeee"/><rect x="1719.97" y="977.69" width="2" height="5.61" fill="#006b50"/><rect x="1721.57" y="983.3" width="2" height="1.34" fill="url(#rb)"/><rect x="1723.65" y="979.67" width="2" height="3.63" fill="#f0eeee"/><rect x="1725.65" y="977.20" width="2" height="6.10" fill="#006b50"/><rect x="1727.25" y="983.3" width="2" height="5.17" fill="url(#rb)"/><rect x="1729.33" y="982.61" width="2" height="0.69" fill="#f0eeee"/><rect x="1731.33" y="979.38" width="2" height="3.92" fill="#006b50"/><rect x="1732.93" y="983.3" width="2" height="12.27" fill="url(#rb)"/><rect x="1735.01" y="983.30" width="2" height="4.70" fill="#f0eeee"/><rect x="1737.01" y="977.89" width="2" height="5.41" fill="#006b50"/><rect x="1738.61" y="983.3" width="2" height="3.36" fill="url(#rb)"/><rect x="1740.69" y="981.24" width="2" height="2.06" fill="#f0eeee"/><rect x="1742.69" y="978.41" width="2" height="4.89" fill="#006b50"/><rect x="1744.29" y="983.3" width="2" height="8.54" fill="url(#rb)"/><rect x="1746.37" y="981.16" width="2" height="2.14" fill="#f0eeee"/><rect x="1748.37" y="975.56" width="2" height="7.74" fill="#006b50"/><rect x="1749.97" y="983.3" width="2" height="4.84" fill="url(#rb)"/><rect x="1752.05" y="979.49" width="2" height="3.81" fill="#f0eeee"/><rect x="1754.05" y="978.61" width="2" height="4.69" fill="#006b50"/><rect x="1755.65" y="983.3" width="2" height="42.20" fill="url(#rb)"/><rect x="1757.73" y="981.73" width="2" height="1.57" fill="#f0eeee"/><rect x="1759.73" y="979.21" width="2" height="4.09" fill="#006b50"/><rect x="1761.33" y="983.3" width="2" height="3.50" fill="url(#rb)"/><rect x="1763.41" y="982.62" width="2" height="0.68" fill="#f0eeee"/><rect x="1765.41" y="980.93" width="2" height="2.37" fill="#006b50"/><rect x="1767.01" y="983.3" width="2" height="4.10" fill="url(#rb)"/><rect x="1769.09" y="980.81" width="2" height="2.49" fill="#f0eeee"/><rect x="1771.09" y="980.80" width="2" height="2.50" fill="#006b50"/><rect x="1772.69" y="983.3" width="2" height="1.44" fill="url(#rb)"/><rect x="1774.77" y="982.77" width="2" height="0.53" fill="#f0eeee"/><rect x="1776.77" y="979.18" width="2" height="4.12" fill="#006b50"/><rect x="1778.37" y="983.3" width="2" height="0.86" fill="url(#rb)"/><rect x="1780.45" y="983.30" width="2" height="5.40" fill="#f0eeee"/><rect x="1782.45" y="979.39" width="2" height="3.91" fill="#006b50"/><rect x="1784.05" y="983.3" width="2" height="5.59" fill="url(#rb)"/><rect x="1786.13" y="982.45" width="2" height="0.85" fill="#f0eeee"/><rect x="1788.13" y="980.86" width="2" height="2.44" fill="#006b50"/><rect x="1789.73" y="983.3" width="2" height="4.27" fill="url(#rb)"/><rect x="1791.81" y="980.68" width="2" height="2.62" fill="#f0eeee"/><rect x="1793.81" y="975.94" width="2" height="7.36" fill="#006b50"/><rect x="1795.41" y="983.3" width="2" height="13.30" fill="url(#rb)"/><rect x="1797.49" y="981.72" width="2" height="1.58" fill="#f0eeee"/><rect x="1799.49" y="977.45" width="2" height="5.85" fill="#006b50"/><rect x="1801.09" y="983.3" width="2" height="8.27" fill="url(#rb)"/><rect x="1803.18" y="982.55" width="2" height="0.75" fill="#f0eeee"/><rect x="1805.18" y="977.99" width="2" height="5.31" fill="#006b50"/><rect x="1806.78" y="983.3" width="2" height="7.88" fill="url(#rb)"/><rect x="1808.86" y="980.00" width="2" height="3.30" fill="#f0eeee"/><rect x="1810.86" y="981.11" width="2" height="2.19" fill="#006b50"/><rect x="1812.46" y="983.3" width="2" height="1.83" fill="url(#rb)"/><rect x="1814.54" y="983.30" width="2" height="24.70" fill="#f0eeee"/><rect x="1816.54" y="962.00" width="2" height="21.30" fill="#006b50"/><rect x="1818.14" y="983.3" width="2" height="31.70" fill="url(#rb)"/><rect x="1822.22" y="965.00" width="2" height="18.30" fill="#006b50"/><rect x="1823.82" y="983.3" width="2" height="44.70" fill="url(#rb)"/><rect x="1825.90" y="975.70" width="2" height="7.60" fill="#f0eeee"/><rect x="1827.90" y="978.31" width="2" height="4.99" fill="#006b50"/><rect x="1829.50" y="983.3" width="2" height="11.62" fill="url(#rb)"/><rect x="1831.58" y="980.93" width="2" height="2.37" fill="#f0eeee"/><rect x="1833.58" y="973.00" width="2" height="10.30" fill="#006b50"/><rect x="1835.18" y="983.3" width="2" height="7.82" fill="url(#rb)"/><rect x="1837.26" y="982.45" width="2" height="0.85" fill="#f0eeee"/><rect x="1839.26" y="977.51" width="2" height="5.79" fill="#006b50"/><rect x="1840.86" y="983.3" width="2" height="1.63" fill="url(#rb)"/><rect x="1842.94" y="983.30" width="2" height="2.13" fill="#f0eeee"/><rect x="1844.94" y="979.73" width="2" height="3.57" fill="#006b50"/><rect x="1846.54" y="983.3" width="2" height="5.81" fill="url(#rb)"/><rect x="1850.62" y="981.21" width="2" height="2.09" fill="#006b50"/><rect x="1852.22" y="983.3" width="2" height="10.31" fill="url(#rb)"/><rect x="1854.30" y="981.83" width="2" height="1.47" fill="#f0eeee"/><rect x="1856.30" y="980.16" width="2" height="3.14" fill="#006b50"/><rect x="1857.90" y="983.3" width="2" height="5.40" fill="url(#rb)"/><rect x="1859.98" y="973.70" width="2" height="9.60" fill="#f0eeee"/><rect x="1861.98" y="971.20" width="2" height="12.10" fill="#006b50"/><rect x="1863.58" y="983.3" width="2" height="6.28" fill="url(#rb)"/><rect x="1865.66" y="981.79" width="2" height="1.51" fill="#f0eeee"/><rect x="1867.66" y="977.23" width="2" height="6.07" fill="#006b50"/><rect x="1869.26" y="983.3" width="2" height="3.54" fill="url(#rb)"/><rect x="1871.34" y="980.90" width="2" height="2.40" fill="#f0eeee"/><rect x="1873.34" y="978.91" width="2" height="4.39" fill="#006b50"/><rect x="1874.94" y="983.3" width="2" height="1.50" fill="url(#rb)"/><rect x="1877.02" y="979.01" width="2" height="4.29" fill="#f0eeee"/><rect x="1879.02" y="980.24" width="2" height="3.06" fill="#006b50"/><rect x="1880.62" y="983.3" width="2" height="1.45" fill="url(#rb)"/><rect x="1882.70" y="981.12" width="2" height="2.18" fill="#f0eeee"/><rect x="1884.70" y="979.99" width="2" height="3.31" fill="#006b50"/><rect x="1886.30" y="983.3" width="2" height="1.55" fill="url(#rb)"/><rect x="1888.38" y="980.04" width="2" height="3.26" fill="#f0eeee"/><rect x="1890.38" y="979.82" width="2" height="3.48" fill="#006b50"/><rect x="1891.98" y="983.3" width="2" height="10.53" fill="url(#rb)"/><rect x="1894.06" y="979.01" width="2" height="4.29" fill="#f0eeee"/><rect x="1896.06" y="979.44" width="2" height="3.86" fill="#006b50"/><rect x="1897.66" y="983.3" width="2" height="1.57" fill="url(#rb)"/><rect x="1899.74" y="983.30" width="2" height="2.10" fill="#f0eeee"/><rect x="1901.74" y="980.14" width="2" height="3.16" fill="#006b50"/><rect x="1903.34" y="983.3" width="2" height="2.82" fill="url(#rb)"/><line x1="97.5" y1="687" x2="97.5" y2="1050" stroke="#d8d8d8" stroke-width="1"/><line x1="89" y1="716.5" x2="97" y2="716.5" stroke="#d8d8d8" stroke-width="1"/><line x1="89" y1="749.5" x2="97" y2="749.5" stroke="#d8d8d8" stroke-width="1"/><line x1="89" y1="783.5" x2="97" y2="783.5" stroke="#d8d8d8" stroke-width="1"/><line x1="89" y1="816.5" x2="97" y2="816.5" stroke="#d8d8d8" stroke-width="1"/><line x1="89" y1="849.5" x2="97" y2="849.5" stroke="#d8d8d8" stroke-width="1"/><line x1="89" y1="883.5" x2="97" y2="883.5" stroke="#d8d8d8" stroke-width="1"/><line x1="89" y1="916.5" x2="97" y2="916.5" stroke="#d8d8d8" stroke-width="1"/><line x1="89" y1="950.5" x2="97" y2="950.5" stroke="#d8d8d8" stroke-width="1"/><line x1="89" y1="983.5" x2="97" y2="983.5" stroke="#d8d8d8" stroke-width="1"/><line x1="89" y1="1016.5" x2="97" y2="1016.5" stroke="#d8d8d8" stroke-width="1"/><line x1="99" y1="1050.5" x2="1910" y2="1050.5" stroke="#d8d8d8" stroke-width="1"/><line x1="170.5" y1="1051" x2="170.5" y2="1055" stroke="#8a8a8a" stroke-width="1"/><line x1="238.5" y1="1051" x2="238.5" y2="1055" stroke="#8a8a8a" stroke-width="1"/><line x1="306.5" y1="1051" x2="306.5" y2="1055" stroke="#8a8a8a" stroke-width="1"/><line x1="374.5" y1="1051" x2="374.5" y2="1055" stroke="#8a8a8a" stroke-width="1"/><line x1="442.5" y1="1051" x2="442.5" y2="1055" stroke="#8a8a8a" stroke-width="1"/><line x1="510.5" y1="1051" x2="510.5" y2="1055" stroke="#8a8a8a" stroke-width="1"/><line x1="578.5" y1="1051" x2="578.5" y2="1055" stroke="#8a8a8a" stroke-width="1"/><line x1="647.5" y1="1051" x2="647.5" y2="1055" stroke="#8a8a8a" stroke-width="1"/><line x1="715.5" y1="1051" x2="715.5" y2="1055" stroke="#8a8a8a" stroke-width="1"/><line x1="783.5" y1="1051" x2="783.5" y2="1055" stroke="#8a8a8a" stroke-width="1"/><line x1="851.5" y1="1051" x2="851.5" y2="1055" stroke="#8a8a8a" stroke-width="1"/><line x1="919.5" y1="1051" x2="919.5" y2="1055" stroke="#8a8a8a" stroke-width="1"/><line x1="987.5" y1="1051" x2="987.5" y2="1055" stroke="#8a8a8a" stroke-width="1"/><line x1="1056.5" y1="1051" x2="1056.5" y2="1055" stroke="#8a8a8a" stroke-width="1"/><line x1="1124.5" y1="1051" x2="1124.5" y2="1055" stroke="#8a8a8a" stroke-width="1"/><line x1="1192.5" y1="1051" x2="1192.5" y2="1055" stroke="#8a8a8a" stroke-width="1"/><line x1="1260.5" y1="1051" x2="1260.5" y2="1055" stroke="#8a8a8a" stroke-width="1"/><line x1="1328.5" y1="1051" x2="1328.5" y2="1055" stroke="#8a8a8a" stroke-width="1"/><line x1="1396.5" y1="1051" x2="1396.5" y2="1055" stroke="#8a8a8a" stroke-width="1"/><line x1="1465.5" y1="1051" x2="1465.5" y2="1055" stroke="#8a8a8a" stroke-width="1"/><line x1="1533.5" y1="1051" x2="1533.5" y2="1055" stroke="#8a8a8a" stroke-width="1"/><line x1="1601.5" y1="1051" x2="1601.5" y2="1055" stroke="#8a8a8a" stroke-width="1"/><line x1="1669.5" y1="1051" x2="1669.5" y2="1055" stroke="#8a8a8a" stroke-width="1"/><line x1="1737.5" y1="1051" x2="1737.5" y2="1055" stroke="#8a8a8a" stroke-width="1"/><line x1="1805.5" y1="1051" x2="1805.5" y2="1055" stroke="#8a8a8a" stroke-width="1"/><line x1="1874.5" y1="1051" x2="1874.5" y2="1055" stroke="#8a8a8a" stroke-width="1"/><polygon points="10,683 98.5,683 91,691 10,691" fill="#dcdcdc"/><rect x="98" y="683" width="166" height="40" fill="#000"/><rect x="192" y="685.5" width="41.3" height="16" rx="3" fill="#dcdcdc"/><rect x="192" y="705.5" width="50.3" height="16" rx="3" fill="#dcdcdc"/><rect x="947.5" y="688.5" width="116" height="27" fill="#000" stroke="#424242" stroke-width="1"/><rect x="964.5" y="1052.5" width="70" height="30" fill="#000" stroke="#c8c8c8" stroke-width="1"/><rect x="9" y="1075" width="1902" height="4" fill="#0f0f0f"/><polygon points="449.8,112.8 457.8,112.8 453.8,116.8" fill="#e8e8e8"/><polygon points="449.8,162.8 457.8,162.8 453.8,166.8" fill="#e8e8e8"/><polygon points="1591.0,294.0 1599.0,294.0 1595,298.0" fill="#e8e8e8"/><polygon points="1741.0,294.0 1749.0,294.0 1745,298.0" fill="#e8e8e8"/><polygon points="1891.0,294.0 1899.0,294.0 1895,298.0" fill="#e8e8e8"/><polygon points="302.0,114.5 310.0,114.5 306,110.5" fill="#e8e8e8"/><polygon points="302.0,218.5 310.0,218.5 306,222.5" fill="#e8e8e8"/><polygon points="599.0,112.0 607.0,112.0 603,108.0" fill="#e8e8e8"/><polygon points="599.0,120.0 607.0,120.0 603,124.0" fill="#e8e8e8"/><g transform="translate(575,109)"><rect x="0" y="2" width="14" height="12" fill="#cfc9c8"/><rect x="1.5" y="5.5" width="11" height="7" fill="#262626"/><rect x="2.5" y="6.3" width="2" height="1.2" fill="#cfc9c8"/><rect x="5.5" y="6.3" width="3" height="1.2" fill="#cfc9c8"/><rect x="9.5" y="6.3" width="2" height="1.2" fill="#cfc9c8"/><rect x="2.5" y="8.3" width="2" height="1.8" fill="#cfc9c8"/><rect x="5.5" y="8.3" width="3" height="1.8" fill="#cfc9c8"/><rect x="9.5" y="8.3" width="2" height="1.8" fill="#cfc9c8"/><rect x="2.5" y="10.8" width="2" height="1.2" fill="#cfc9c8"/><rect x="5.5" y="10.8" width="3" height="1.2" fill="#cfc9c8"/><rect x="9.5" y="10.8" width="2" height="1.2" fill="#cfc9c8"/><rect x="3.2" y="0" width="1.3" height="3.5" fill="#cfc9c8"/><rect x="9.8" y="0" width="1.3" height="3.5" fill="#cfc9c8"/></g><polygon points="599.0,162.0 607.0,162.0 603,158.0" fill="#e8e8e8"/><polygon points="599.0,170.0 607.0,170.0 603,174.0" fill="#e8e8e8"/><g transform="translate(575,159)"><rect x="0" y="2" width="14" height="12" fill="#cfc9c8"/><rect x="1.5" y="5.5" width="11" height="7" fill="#262626"/><rect x="2.5" y="6.3" width="2" height="1.2" fill="#cfc9c8"/><rect x="5.5" y="6.3" width="3" height="1.2" fill="#cfc9c8"/><rect x="9.5" y="6.3" width="2" height="1.2" fill="#cfc9c8"/><rect x="2.5" y="8.3" width="2" height="1.8" fill="#cfc9c8"/><rect x="5.5" y="8.3" width="3" height="1.8" fill="#cfc9c8"/><rect x="9.5" y="8.3" width="2" height="1.8" fill="#cfc9c8"/><rect x="2.5" y="10.8" width="2" height="1.2" fill="#cfc9c8"/><rect x="5.5" y="10.8" width="3" height="1.2" fill="#cfc9c8"/><rect x="9.5" y="10.8" width="2" height="1.2" fill="#cfc9c8"/><rect x="3.2" y="0" width="1.3" height="3.5" fill="#cfc9c8"/><rect x="9.8" y="0" width="1.3" height="3.5" fill="#cfc9c8"/></g><g fill="none" stroke="#d2ccca" stroke-width="1"><rect x="1799.5" y="11.5" width="3" height="5.5"/><polyline points="1802.5,11.5 1807.5,7.5 1807.5,20.5 1802.5,17"/><line x1="1809.8" y1="11.5" x2="1809.8" y2="16.8"/><line x1="1811.8" y1="9" x2="1811.8" y2="19"/></g><g fill="none" stroke="#d2ccca" stroke-width="1"><rect x="1826.5" y="14.5" width="6" height="4"/><line x1="1832.5" y1="13" x2="1832.5" y2="20"/><line x1="1833" y1="16.5" x2="1837" y2="16.5"/></g><rect x="1851" y="18" width="9" height="3" fill="#d2ccca"/><g fill="none" stroke="#d2ccca" stroke-width="1"><rect x="1876.5" y="14.5" width="6" height="6"/><polyline points="1879.5,14.5 1879.5,11.5 1885.5,11.5 1885.5,17.5 1882.5,17.5"/></g><rect x="1876" y="14" width="7" height="2" fill="#d2ccca"/><rect x="1879" y="11" width="7" height="2" fill="#d2ccca"/><g stroke="#d2ccca" stroke-width="2"><line x1="1901.5" y1="12" x2="1910.5" y2="20"/><line x1="1910.5" y1="12" x2="1901.5" y2="20"/></g></svg><div class="t" style="top:341.84px;font-size:12px;color:#f0f0f0;letter-spacing:-0.3px;right:1832.4px;text-align:right;">2.5K</div><div class="t" style="top:378.59px;font-size:12px;color:#f0f0f0;letter-spacing:-0.3px;right:1832.4px;text-align:right;">2K</div><div class="t" style="top:415.34px;font-size:12px;color:#f0f0f0;letter-spacing:-0.3px;right:1832.4px;text-align:right;">1.5K</div><div class="t" style="top:452.09px;font-size:12px;color:#f0f0f0;letter-spacing:-0.3px;right:1832.4px;text-align:right;">1K</div><div class="t" style="top:488.84px;font-size:12px;color:#f0f0f0;letter-spacing:-0.3px;right:1832.4px;text-align:right;">500</div><div class="t" style="top:525.59px;font-size:12px;color:#f0f0f0;letter-spacing:-0.3px;right:1832.4px;text-align:right;">0</div><div class="t" style="top:562.34px;font-size:12px;color:#f0f0f0;letter-spacing:-0.3px;right:1832.4px;text-align:right;">-500</div><div class="t" style="top:599.09px;font-size:12px;color:#f0f0f0;letter-spacing:-0.3px;right:1832.4px;text-align:right;">-1K</div><div class="t" style="top:635.84px;font-size:12px;color:#f0f0f0;letter-spacing:-0.3px;right:1832.4px;text-align:right;">-1.5K</div><div class="t" style="top:517.64px;font-size:12px;color:#111111;letter-spacing:-0.5px;right:1829.5px;text-align:right;">125.34</div><div class="t" style="top:315.64px;font-size:12px;color:#f0f0f0;letter-spacing:-0.4px;left:112.5px;">Avg. PnL:</div><div class="t" style="top:335.34px;font-size:12px;color:#f0f0f0;letter-spacing:-0.15px;left:112.5px;">(+) Avg. PnL:</div><div class="t" style="top:355.44px;font-size:12px;color:#f0f0f0;letter-spacing:-0.15px;left:112.5px;">(-) Avg. PnL:</div><div class="t" style="top:315.64px;font-size:12px;color:#111111;letter-spacing:-0.35px;left:195.4px;">918.00</div><div class="t" style="top:335.34px;font-size:12px;color:#111111;letter-spacing:-0.35px;left:195.4px;">1,722.00</div><div class="t" style="top:355.44px;font-size:12px;color:#111111;letter-spacing:-0.35px;left:195.4px;">-1,538.00</div><div class="t" style="top:324.64px;font-size:12px;color:#f4f4f4;letter-spacing:0.2px;left:934.5px;">Avg. PnL From Start Date</div><div class="t" style="top:710.64px;font-size:12px;color:#f0f0f0;letter-spacing:-0.3px;right:1832.4px;text-align:right;">40K</div><div class="t" style="top:744.04px;font-size:12px;color:#f0f0f0;letter-spacing:-0.3px;right:1832.4px;text-align:right;">35K</div><div class="t" style="top:777.44px;font-size:12px;color:#f0f0f0;letter-spacing:-0.3px;right:1832.4px;text-align:right;">30K</div><div class="t" style="top:810.84px;font-size:12px;color:#f0f0f0;letter-spacing:-0.3px;right:1832.4px;text-align:right;">25K</div><div class="t" style="top:844.24px;font-size:12px;color:#f0f0f0;letter-spacing:-0.3px;right:1832.4px;text-align:right;">20K</div><div class="t" style="top:877.64px;font-size:12px;color:#f0f0f0;letter-spacing:-0.3px;right:1832.4px;text-align:right;">15K</div><div class="t" style="top:911.04px;font-size:12px;color:#f0f0f0;letter-spacing:-0.3px;right:1832.4px;text-align:right;">10K</div><div class="t" style="top:944.44px;font-size:12px;color:#f0f0f0;letter-spacing:-0.3px;right:1832.4px;text-align:right;">5K</div><div class="t" style="top:977.84px;font-size:12px;color:#f0f0f0;letter-spacing:-0.3px;right:1832.4px;text-align:right;">0</div><div class="t" style="top:1011.24px;font-size:12px;color:#f0f0f0;letter-spacing:-0.3px;right:1832.4px;text-align:right;">-5K</div><div class="t" style="top:687.64px;font-size:12px;color:#f0f0f0;letter-spacing:-0.4px;left:112.5px;">Avg. PnL:</div><div class="t" style="top:707.44px;font-size:12px;color:#f0f0f0;letter-spacing:-0.15px;left:112.5px;">(+) Avg. PnL:</div><div class="t" style="top:687.64px;font-size:12px;color:#111111;letter-spacing:-0.35px;left:195.4px;">600.00</div><div class="t" style="top:707.44px;font-size:12px;color:#111111;letter-spacing:-0.35px;left:195.4px;">1,127.00</div><div class="t" style="top:696.84px;font-size:12px;color:#f4f4f4;letter-spacing:0.1px;left:952.3px;">Avg. PnL By Period</div><div class="t" style="top:1031.84px;font-size:12px;color:#f0f0f0;letter-spacing:-0.5px;left:109.4px;">© 2021 Tickblaze</div><div class="t" style="top:1056.84px;font-size:12px;color:#f4f4f4;letter-spacing:-0.4px;left:140.50px;width:60px;text-align:center;">1996</div><div class="t" style="top:1056.84px;font-size:12px;color:#f4f4f4;letter-spacing:-0.4px;left:208.66px;width:60px;text-align:center;">1997</div><div class="t" style="top:1056.84px;font-size:12px;color:#f4f4f4;letter-spacing:-0.4px;left:276.82px;width:60px;text-align:center;">1998</div><div class="t" style="top:1056.84px;font-size:12px;color:#f4f4f4;letter-spacing:-0.4px;left:344.98px;width:60px;text-align:center;">1999</div><div class="t" style="top:1056.84px;font-size:12px;color:#f4f4f4;letter-spacing:-0.4px;left:413.14px;width:60px;text-align:center;">2000</div><div class="t" style="top:1056.84px;font-size:12px;color:#f4f4f4;letter-spacing:-0.4px;left:481.30px;width:60px;text-align:center;">2001</div><div class="t" style="top:1056.84px;font-size:12px;color:#f4f4f4;letter-spacing:-0.4px;left:549.46px;width:60px;text-align:center;">2002</div><div class="t" style="top:1056.84px;font-size:12px;color:#f4f4f4;letter-spacing:-0.4px;left:617.62px;width:60px;text-align:center;">2003</div><div class="t" style="top:1056.84px;font-size:12px;color:#f4f4f4;letter-spacing:-0.4px;left:685.78px;width:60px;text-align:center;">2004</div><div class="t" style="top:1056.84px;font-size:12px;color:#f4f4f4;letter-spacing:-0.4px;left:753.94px;width:60px;text-align:center;">2005</div><div class="t" style="top:1056.84px;font-size:12px;color:#f4f4f4;letter-spacing:-0.4px;left:822.11px;width:60px;text-align:center;">2006</div><div class="t" style="top:1056.84px;font-size:12px;color:#f4f4f4;letter-spacing:-0.4px;left:890.27px;width:60px;text-align:center;">2007</div><div class="t" style="top:1056.84px;font-size:12px;color:#f4f4f4;letter-spacing:-0.4px;left:1026.59px;width:60px;text-align:center;">2009</div><div class="t" style="top:1056.84px;font-size:12px;color:#f4f4f4;letter-spacing:-0.4px;left:1094.75px;width:60px;text-align:center;">2010</div><div class="t" style="top:1056.84px;font-size:12px;color:#f4f4f4;letter-spacing:-0.4px;left:1162.91px;width:60px;text-align:center;">2011</div><div class="t" style="top:1056.84px;font-size:12px;color:#f4f4f4;letter-spacing:-0.4px;left:1231.07px;width:60px;text-align:center;">2012</div><div class="t" style="top:1056.84px;font-size:12px;color:#f4f4f4;letter-spacing:-0.4px;left:1299.23px;width:60px;text-align:center;">2013</div><div class="t" style="top:1056.84px;font-size:12px;color:#f4f4f4;letter-spacing:-0.4px;left:1367.39px;width:60px;text-align:center;">2014</div><div class="t" style="top:1056.84px;font-size:12px;color:#f4f4f4;letter-spacing:-0.4px;left:1435.55px;width:60px;text-align:center;">2015</div><div class="t" style="top:1056.84px;font-size:12px;color:#f4f4f4;letter-spacing:-0.4px;left:1503.71px;width:60px;text-align:center;">2016</div><div class="t" style="top:1056.84px;font-size:12px;color:#f4f4f4;letter-spacing:-0.4px;left:1571.87px;width:60px;text-align:center;">2017</div><div class="t" style="top:1056.84px;font-size:12px;color:#f4f4f4;letter-spacing:-0.4px;left:1640.03px;width:60px;text-align:center;">2018</div><div class="t" style="top:1056.84px;font-size:12px;color:#f4f4f4;letter-spacing:-0.4px;left:1708.19px;width:60px;text-align:center;">2019</div><div class="t" style="top:1056.84px;font-size:12px;color:#f4f4f4;letter-spacing:-0.4px;left:1776.35px;width:60px;text-align:center;">2020</div><div class="t" style="top:1056.84px;font-size:12px;color:#f4f4f4;letter-spacing:-0.4px;left:1844.51px;width:60px;text-align:center;">2021</div><div class="t" style="top:1057.84px;font-size:12px;color:#f4f4f4;letter-spacing:0.05px;left:968px;">03/01/2008</div><div style="position:absolute;left:10px;top:683px;width:82px;height:8px;overflow:hidden"><div class="t" style="right:0;top:-3.66px;font-size:12px;color:#111">0</div></div><div style="position:absolute;left:0;top:0;width:1920px;height:1080px;box-sizing:border-box;border:1px solid #5234f5;pointer-events:none"></div></body></html>
